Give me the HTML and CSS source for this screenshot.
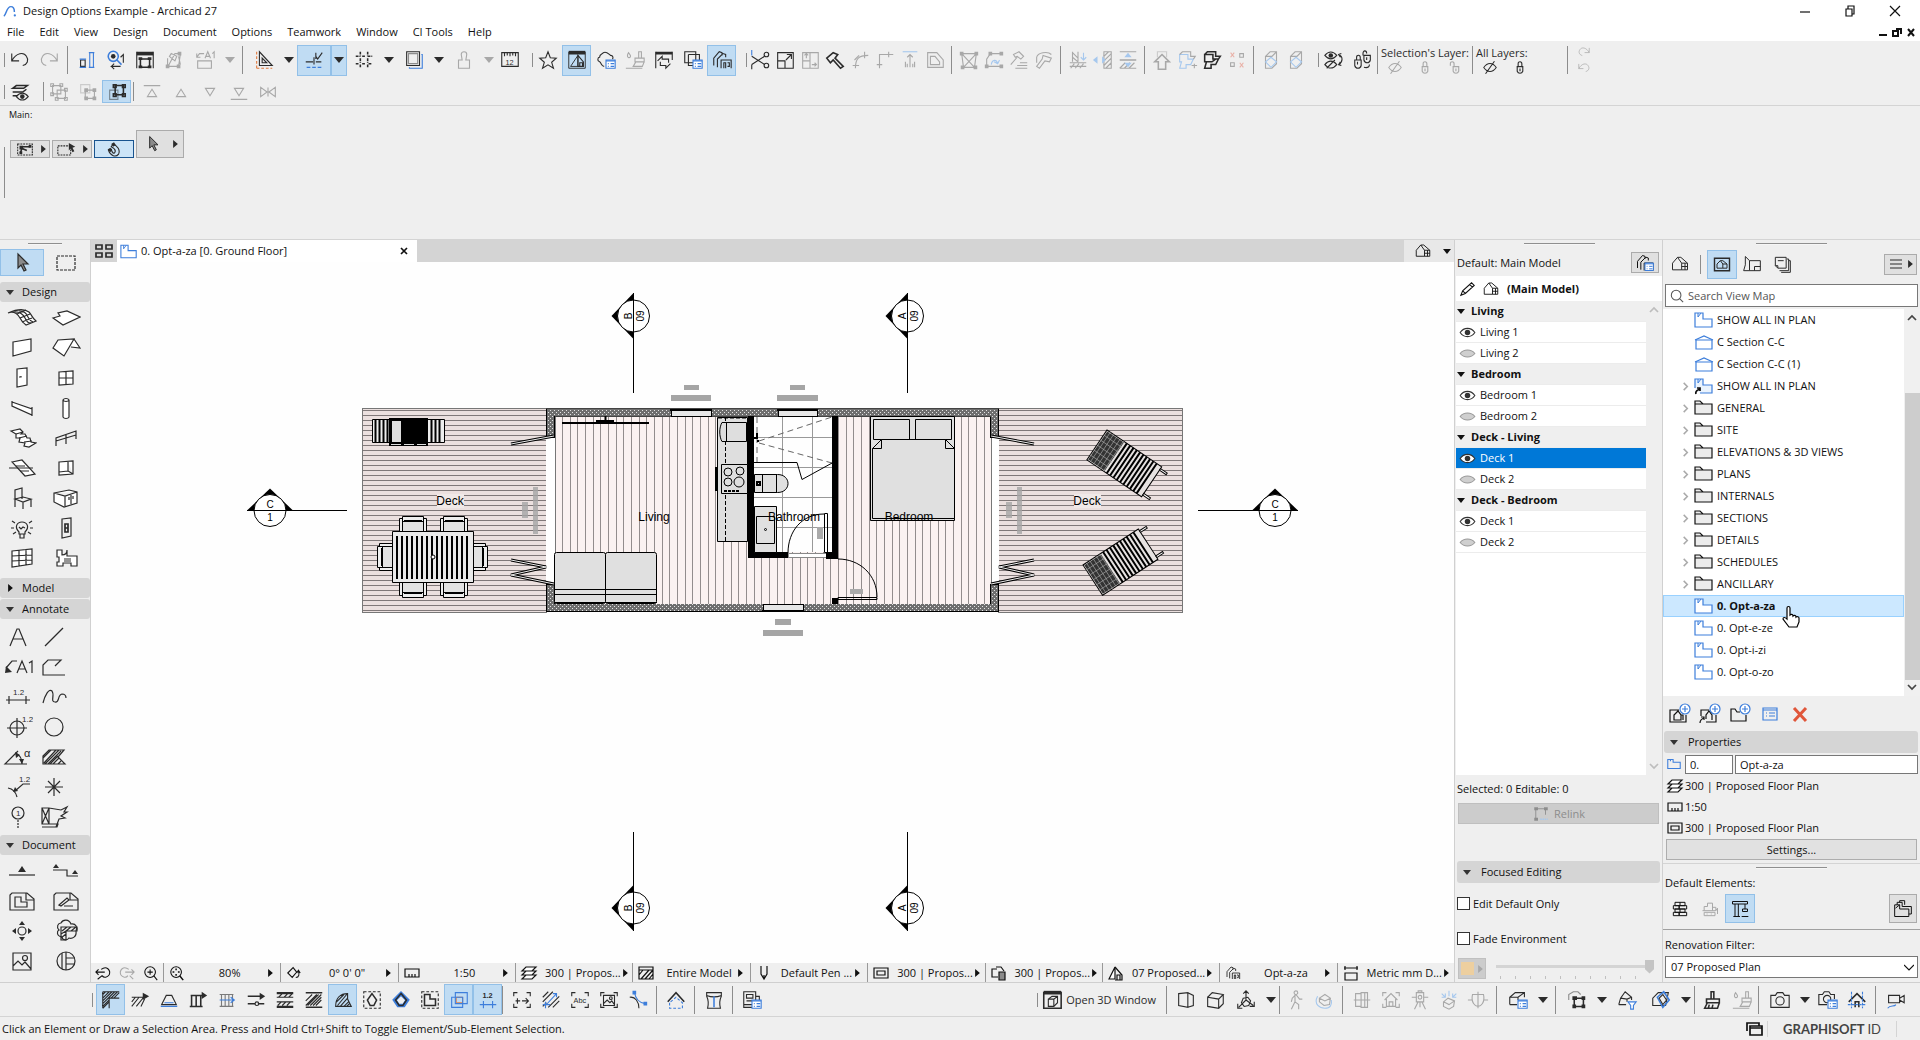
FILE: index.html
```
<!DOCTYPE html>
<html lang="en">

<head>
    <meta charset="UTF-8">
    <meta name="viewport" content="width=device-width, initial-scale=1.0">
    <title>Design Options Example - Archicad 27</title>
    <link rel="stylesheet" href="styles.css">
</head>

<body>

    <!-- Icon sprite -->
    <svg class="sprite" aria-hidden="true">
        <!-- generic -->
        <symbol id="down" viewBox="0 0 10 6"><path class="f" d="M0 0h10L5 6z"/></symbol>
        <symbol id="right" viewBox="0 0 6 10"><path class="f" d="M0 0v10L6 5z"/></symbol>
        <symbol id="chev-up" viewBox="0 0 10 10"><path class="thick" d="M1 7l4-4 4 4"/></symbol>
        <symbol id="chev-down" viewBox="0 0 10 10"><path class="thick" d="M1 3l4 4 4-4"/></symbol>
        <symbol id="chev-thin" viewBox="0 0 10 10"><path d="M0 2l5 5 5-5"/></symbol>
        <symbol id="chev-right" viewBox="0 0 10 10"><path class="thick" d="M3 1l4 4-4 4"/></symbol>
        <symbol id="logo" viewBox="0 0 16 16"><path class="b thick" d="M1 14C4 12 4 3 9 3c3 0 4 3 4 6"/><circle class="bf" cx="13.5" cy="13" r="1.3"/></symbol>
        <symbol id="cursor" viewBox="0 0 24 24"><path class="grey" d="M8 3v14l3-3 3 6 2-1-3-6h5z"/></symbol>

        <!-- standard toolbar -->
        <symbol id="undo" viewBox="0 0 24 24"><path d="M3 5v8h8M3 13C8 4 16 3 19 8c3 4 1 9-4 10"/></symbol>
        <symbol id="redo" viewBox="0 0 24 24"><path d="M21 5v8h-8M21 13C16 4 8 3 5 8c-3 4-1 9 4 10"/></symbol>
        <symbol id="pick" viewBox="0 0 24 24"><path d="M5 12h5v7H5z"/><path class="b" d="M4 20h7M14 4h6M14 20h6M4 11h7M15 4v16M19 4v16"/></symbol>
        <symbol id="inspect" viewBox="0 0 24 24"><circle class="b thick" cx="9" cy="8" r="5.5"/><circle class="f" cx="9" cy="8" r="2.5"/><path class="b thick" d="M13 12l5 5"/><path d="M20 15V6l-3 3M17 19H7l3-3M7 19l3 3"/></symbol>
        <symbol id="fit-frame" viewBox="0 0 24 24"><path class="f" d="M3 3h18v4H3z"/><path d="M3 3v18M21 3v18"/><path class="thick" d="M7 11h10v9H7z"/><path class="f" d="M5 9h4v3H5zM15 9h4v3h-4zM5 18h4v3H5zM15 18h4v3h-4z"/></symbol>
        <symbol id="magic" viewBox="0 0 24 24"><path d="M5 10v9h12l2-14h-6L5 20M9 5l6 3-2 5-6-5zM17 8l2 9"/><path class="f" d="M3 17h4v4H3zM15 17h4v4h-4zM16 3h4v4h-4z"/></symbol>
        <symbol id="label-box" viewBox="0 0 24 24"><path d="M4 13h15v8H4zM11 5H6L3 9M3 5v4h4M12 10l3-7 3 7M13 8h4M20 5l2-2v7"/></symbol>
        <symbol id="triangle" viewBox="0 0 24 24"><path d="M7 3v15h14zM10 10v5h5z"/><path class="o" d="M4 3v18M4 21h17" stroke-dasharray="3 2"/></symbol>
        <symbol id="guide" viewBox="0 0 24 24"><path d="M3 14h8M14 14h6M12 9v8M14 8l2 3 5-7M14 4v7"/><path class="b" d="M4 20h16" stroke-dasharray="4 2"/></symbol>
        <symbol id="grid" viewBox="0 0 24 24"><path class="thick" d="M8 3v5M8 10v5M8 17v4M16 3v5M16 10v5M16 17v4M3 8h5M10 8h4M16 8h5M3 16h4M10 16h4M17 16h4" stroke-dasharray="3 1"/></symbol>
        <symbol id="trace" viewBox="0 0 24 24"><path d="M4 3h14v15H4z"/><path class="b" d="M20 6h1v15H7v-1"/><path d="M6 5h10v11H6z" opacity=".5"/></symbol>
        <symbol id="stamp" viewBox="0 0 24 24"><path d="M10 12l-1-6c0-4 6-4 6 0l-1 6h4v9H6v-9z"/></symbol>
        <symbol id="ruler12" viewBox="0 0 24 24"><path d="M3 19V4h18v15zM6 4v4M9 4v3M12 4v4M15 4v3M18 4v4"/><text class="t8" x="7" y="17">12</text></symbol>
        <symbol id="star" viewBox="0 0 24 24"><path d="M12 3l2.500 6.500 6.500.5-5 4.500 2 6.500-6-3.700L6 21l2-6.500L3 10l6.500-.5z"/></symbol>
        <symbol id="house-win" viewBox="0 0 24 24"><path class="f" d="M3 2h18v4H3z"/><path d="M3 3v18h18V3M13 7L5 19h8z" stroke-width="1"/><path d="M13 7l6 7v5h-6zM15 19v-4h3v4"/></symbol>
        <symbol id="cloud-list" viewBox="0 0 24 24"><path d="M10 19c-3 0-3-4-5-5-3-1-2-5 0-5 0-4 3-3 4-5 4-2 6 2 8 3 3 0 3 3 2 4"/><use href="#list-badge"/></symbol>
        <symbol id="list-badge" viewBox="0 0 24 24"><path class="b white" d="M12 12h10v9H12z"/><path class="b" d="M12 13h10M14 16h1M17 16h4M14 19h1M17 19h4"/></symbol>
        <symbol id="drop-brush" viewBox="0 0 24 24"><path d="M5 4c-4 6 3 7 2 3zM16 3h3v7h-3zM12 10h10v4H12zM13 14l-3 5h10l2-5M2 21h18"/></symbol>
        <symbol id="win-swap" viewBox="0 0 24 24"><path class="f" d="M3 3h18v3H3z"/><path d="M3 3v18M21 3v9M5 13l5-5v3h7v4M19 16l-5 5v-3H8v-4"/></symbol>
        <symbol id="copy-list" viewBox="0 0 24 24"><path d="M3 3h12v12H3zM7 6h12v6M7 6v12h5"/><use href="#list-badge"/></symbol>
        <symbol id="options" viewBox="0 0 24 24"><path d="M3 18v-8l6-7 3 1v3M7 20v-9l6-6 3 1v3M11 21v-9h11v9M14 21v-6h2v6M18 15h2v4h-2"/></symbol>
        <symbol id="scissors" viewBox="0 0 24 24"><path d="M3 8l14 9M3 17L17 8"/><circle cx="19" cy="6" r="2.5"/><circle cx="19" cy="18" r="2.5"/><path class="b" d="M3 1v6"/><path d="M3 17v5"/></symbol>
        <symbol id="resize" viewBox="0 0 24 24"><path d="M4 4h17v17H4zM4 13h8v8M13 12l6-6M14 6h5v5"/></symbol>
        <symbol id="stretch" viewBox="0 0 24 24"><path d="M4 13h8v8H4zM4 4h17v17H4zM8 10V5M6 7l2-2 2 2M14 17h5M17 15l2 2-2 2M12 4v9"/></symbol>
        <symbol id="axe" viewBox="0 0 24 24"><path class="thick" d="M3 10l7-6 5 2-3 4 9 9-3 2-8-9-3 3z"/></symbol>
        <symbol id="fillet" viewBox="0 0 24 24"><path d="M7 21c0-10 3-14 14-14M4 18h7M17 3v7M6 12l5-5"/></symbol>
        <symbol id="corner" viewBox="0 0 24 24"><path d="M6 21V6h15M3 17h6M16 3v6"/></symbol>
        <symbol id="rise" viewBox="0 0 24 24"><path class="b" d="M4 3h16"/><path d="M12 20V6M9 9l3-3 3 3M7 20v-6M17 20v-6M9 20v-4M15 20v-4"/></symbol>
        <symbol id="offset" viewBox="0 0 24 24"><path d="M4 4h10l7 8v8H4zM7 8h5l5 6v3H7z"/></symbol>
        <symbol id="nodes-x" viewBox="0 0 24 24"><path d="M4 5h16l-2 15H6zM4 5l14 15M20 5L6 20"/><path class="f" d="M2 3h4v4H2zM18 3h4v4h-4zM3 18h4v4H3zM17 18h4v4h-4z"/></symbol>
        <symbol id="nodes-arc" viewBox="0 0 24 24"><path d="M8 5h12M8 5L4 11v8h16"/><path class="b" d="M9 17c1-6 6-6 7-1M18 12l-2 4-4-2"/><path class="f" d="M6 3h4v4H6zM18 3h4v4h-4zM2 17h4v4H2zM18 17h4v4h-4z"/></symbol>
        <symbol id="hammer" viewBox="0 0 24 24"><path d="M6 6l6-3 5 5-3 3-4-3-2 1zM10 9l-7 8M13 15h8M10 18h11M8 21h13"/></symbol>
        <symbol id="hammer2" viewBox="0 0 24 24"><path d="M4 15V9c1-5 12-7 16-3M11 7l9 3-2 4-5-1-6 8-3-2 6-8z"/></symbol>
        <symbol id="hatch-down" viewBox="0 0 24 24"><path d="M6 3v11M12 3v11M6 4l6 6M6 9l6 5M3 15h18M3 19h18M4 21l4-5M9 21l4-5M14 21l4-5"/><path class="b" d="M18 4v8M15 9l3 3 3-3"/></symbol>
        <symbol id="hatch-side" viewBox="0 0 24 24"><path d="M13 3h8v18h-8zM13 8l5-5M13 13l8-8M13 18l8-8M15 21l6-6"/><path class="bf" d="M1 12l5-4v8zM11 8l4 4-4 4z"/></symbol>
        <symbol id="hatch-mid" viewBox="0 0 24 24"><path d="M3 3h18M3 21h18M3 21l6-6M8 21l6-6M13 21l6-6"/><path class="thick" d="M3 12h18"/><path class="bf" d="M12 4l4 5H8zM12 20l4-5H8z"/></symbol>
        <symbol id="arrow-house" viewBox="0 0 24 24"><path class="thick" d="M12 6l8 8h-4v8H8v-8H4z"/><path d="M7 9V3h10v6" opacity=".5"/></symbol>
        <symbol id="beam" viewBox="0 0 24 24"><path class="b" d="M4 6h9v5h6l-3 6h-5v4H4l2-7H4z"/><path d="M4 6l3-3h9v5h5l-2 3M20 16v5M17 18h6"/></symbol>
        <symbol id="beam-dark" viewBox="0 0 24 24"><path class="thick" d="M4 6h9v5h6l-3 6h-5v4H4l2-7H4zM4 6l3-3h9v5h5l-2 3M6 14h6l4-3"/></symbol>
        <symbol id="xo" viewBox="0 0 24 24"><path class="r" d="M5 4l4 5M9 4L5 9M15 15l4 5M19 15l-4 5"/><path d="M15 5h4v4h-4zM5 15h4v4H5z"/></symbol>
        <symbol id="prism" viewBox="0 0 24 24"><path d="M6 8l5-5h7v13l-5 5H6zM6 8h7l5-5"/><path class="b" d="M6 14l6-5 6 5-6 6z"/></symbol>
        <symbol id="eye-swap" viewBox="0 0 24 24"><path d="M2 7c4-5 9-5 13 0-4 5-9 5-13 0zM2 17c4-5 9-5 13 0-4 5-9 5-13 0zM4 21l9-9M17 6c5 2 5 8 0 11M20 5l-3 1 2 3M19 14l-2 3 3 1"/><circle class="f" cx="8.5" cy="7" r="2.5"/></symbol>
        <symbol id="lock-swap" viewBox="0 0 24 24"><path d="M3 12h7v6c-1 4-6 4-7 0zM5 12V9c0-3 4-3 4 0v3M13 7h7v5c-1 4-6 4-7 0zM12 7V5c0-4 4-4 4 0M13 20c5 1 6-1 6-3M6 14v3M16 9v3"/></symbol>
        <symbol id="eye-off" viewBox="0 0 18 14"><path d="M2 7c4-6 10-6 14 0-4 6-10 6-14 0zM4 14L14 0"/></symbol>
        <symbol id="lock" viewBox="0 0 14 14"><path d="M4 6h6v5c-1 3-5 3-6 0zM5 6V3c0-3 4-3 4 0v3M7 8v3"/></symbol>
        <symbol id="unlock" viewBox="0 0 14 14"><path d="M5 6h6v5c-1 3-5 3-6 0zM2 5V3c0-3 4-3 4 0v3M8 8v3"/></symbol>

        <!-- second toolbar -->
        <symbol id="layers-eye" viewBox="0 0 24 24"><path class="thick" d="M4 8l4-3h12l-4 3zM4 12h11l4-3M4 16h5"/><path d="M8 17c4-5 9-5 13 0-4 5-9 5-13 0z"/><circle class="f" cx="14.5" cy="17" r="2.5"/></symbol>
        <symbol id="group" viewBox="0 0 24 24"><path d="M5 5h9v9H5zM10 10h9v9h-9z"/><path d="M3 3h3v3H3zM13 3h3v3h-3zM3 13h3v3H3zM18 8h3v3h-3zM8 18h3v3H8zM18 18h3v3h-3z"/></symbol>
        <symbol id="group2" viewBox="0 0 24 24"><path d="M4 4h10v9H4z" opacity=".5"/><path d="M9 10h10v9H9z"/><path class="f" d="M8 8h4v4H8zM17 8h4v4h-4zM8 17h4v4H8zM17 17h4v4h-4z"/></symbol>
        <symbol id="group3" viewBox="0 0 24 24"><path d="M4 10h9v10H4z" opacity=".5"/><path class="thick" d="M10 5h9v10h-9zM8 4h3v3H8zM18 4h3v3h-3zM8 14h3v3H8zM18 14h3v3h-3z"/></symbol>
        <symbol id="tri-top" viewBox="0 0 24 24"><path d="M3 5h18M12 9l5 8H7z"/></symbol>
        <symbol id="tri-up" viewBox="0 0 24 24"><path d="M12 9l5 8H7z"/></symbol>
        <symbol id="tri-down" viewBox="0 0 24 24"><path d="M12 16l5-8H7z"/></symbol>
        <symbol id="tri-bottom" viewBox="0 0 24 24"><path d="M12 16l5-8H7zM3 20h18"/></symbol>
        <symbol id="mirror" viewBox="0 0 24 24"><path d="M4 7v10l7-5zM20 7v10l-7-5zM12 7v10"/></symbol>
        <symbol id="poly-sel" viewBox="0 0 24 16"><path d="M4 2h16v12H4z" stroke-dasharray="2 1"/><path class="thick" d="M7 12l2-7h8M7 6l7 3"/><path class="f" d="M6 4h4v4H6zM16 3h3v3h-3zM6 10h3v3H6z"/></symbol>
        <symbol id="rect-sel" viewBox="0 0 24 16"><path d="M2 4h14v10H2z" stroke-dasharray="2 1"/><path class="f" d="M14 1l7 4-3 1 2 4-2 1-2-4-2 2z"/></symbol>
        <symbol id="magnet" viewBox="0 0 24 16"><path d="M6 9c2 6 8 8 11 4 2-4-1-9-6-11L9 5c4 2 5 4 4 6s-3 1-4-3z"/><path class="f" d="M5 8l3-2 2 2-2 3zM9 2l3-2 2 3-3 2z"/></symbol>

        <!-- toolbox -->
        <symbol id="t-marquee" viewBox="0 0 30 24"><path d="M6 5h18v14H6z" stroke-dasharray="3 1"/></symbol>
        <symbol id="t-shell" viewBox="0 0 30 24"><path class="white" d="M1 7c5-2 9 0 12 5 2 4 3 5 6 7l10-4c-4-3-4-6-7-9-4-3-12-3-21 1z"/><path d="M6 6c7-1 10 2 12 6s3 5 6 5M12 5c6 0 8 3 9 6 2 3 2 4 5 5M10 8l9-4M13 12l10-4M15 16l10-4"/></symbol>
        <symbol id="t-slab" viewBox="0 0 30 24"><path class="white" d="M2 12l7-2-2-3 9-2 13 6-17 8z"/></symbol>
        <symbol id="t-wall" viewBox="0 0 30 24"><path class="white" d="M6 6l18-3v12L6 20z"/></symbol>
        <symbol id="t-roof" viewBox="0 0 30 24"><path class="white" d="M2 12l5-8 16-1-10 17zM23 3l6 9-9-1"/></symbol>
        <symbol id="t-door" viewBox="0 0 30 24"><path class="white" d="M10 3l10-1v17l-10 2zM12 11h2v-1"/></symbol>
        <symbol id="t-window" viewBox="0 0 30 24"><path class="white" d="M8 6l14-1v13L8 19zM15 5v13M8 12h14"/></symbol>
        <symbol id="t-beam" viewBox="0 0 30 24"><path class="white" d="M5 6l20 7v6L5 10zM5 5v5M25 11v9"/></symbol>
        <symbol id="t-column" viewBox="0 0 30 24"><path class="white" d="M12 4c1-2 5-2 6 0v17c-1 2-5 2-6 0zM12 4c1 2 5 2 6 0"/></symbol>
        <symbol id="t-stair" viewBox="0 0 30 24"><path class="white" d="M4 5l9-2 3 3-2 2h4l2 4h3l1 4 5 1-7 4-5-1 1-3-6-1 1-4H9V8z"/><path d="M9 8l7-2M12 12l8-2M17 16l8-1"/></symbol>
        <symbol id="t-rail" viewBox="0 0 30 24"><path d="M5 20v-8l20-7v8M15 9v9M5 15l20-6"/></symbol>
        <symbol id="t-ramp" viewBox="0 0 30 24"><path class="white" d="M5 6l10-2 13 14-10 2z"/><path d="M2 12h24M9 10h9M13 15h9"/></symbol>
        <symbol id="t-opening" viewBox="0 0 30 24"><path class="white" d="M8 6l14-1v13L8 19zM17 5v10l5 3M17 15l-9 1"/></symbol>
        <symbol id="t-chair" viewBox="0 0 30 24"><path d="M8 21V4l7-2v11M8 13l8 3 8-3-8-2zM16 16v7M24 13v8"/></symbol>
        <symbol id="t-cabinet" viewBox="0 0 30 24"><path class="white" d="M3 7l15-3 8 2v11L13 21 3 16zM3 7l11 3 12-4M14 10v11M20 9v9M18 11v3M22 10v3"/></symbol>
        <symbol id="t-lamp" viewBox="0 0 30 24"><path d="M12 16c-5-5-2-10 3-10s8 5 3 10v2h-6zM13 18v4h4v-4M12 11l2 2 2-2 2 1M5 5l3 2M25 5l-3 2M4 12h3M23 12h3M6 18l3-2M24 18l-3-2"/></symbol>
        <symbol id="t-switch" viewBox="0 0 30 24"><path d="M11 3l9-1v18l-9 2z"/><path class="thick" d="M14 8h3v8h-3zM14 12h3"/></symbol>
        <symbol id="t-curtain" viewBox="0 0 30 24"><path class="white" d="M5 5l20-2v15L5 21zM12 4v16M19 3v16M5 10l20-1M5 15l20-1"/></symbol>
        <symbol id="t-zone" viewBox="0 0 30 24"><path class="white" d="M6 4h5v5c4 0 5-2 5-5h0v6h10v10H20v-3h-8v3H6v-4h2v-5H6zM13 13h7M13 15h7"/></symbol>
        <symbol id="t-text" viewBox="0 0 30 24"><path d="M7 21l7-17h2l7 17M10 14h10"/></symbol>
        <symbol id="t-line" viewBox="0 0 30 24"><path d="M6 21L24 3"/></symbol>
        <symbol id="t-label" viewBox="0 0 30 24"><path d="M14 6H9l-6 7M14 18l5-12 5 12M16 14h6M26 8l3-2v12"/><path class="f" d="M2 18l1-7 6 6z"/></symbol>
        <symbol id="t-poly" viewBox="0 0 30 24"><path d="M26 20H4V10l5-5h13l-6 6"/></symbol>
        <symbol id="t-dim" viewBox="0 0 30 24"><path d="M3 15h24M6 11v8M23 11v8"/><text class="t8" x="10" y="10">1.2</text></symbol>
        <symbol id="t-spline" viewBox="0 0 30 24"><path d="M4 18C6 10 10 3 13 6c3 4-2 11 3 11 5 1 2-7 7-8 3 0 4 2 4 4"/></symbol>
        <symbol id="t-level" viewBox="0 0 30 24"><circle cx="14" cy="13" r="7"/><path d="M14 3v20M4 13h20"/><text class="t8" x="19" y="7">1.2</text></symbol>
        <symbol id="t-circle" viewBox="0 0 30 24"><circle cx="15" cy="12" r="9"/></symbol>
        <symbol id="t-angle" viewBox="0 0 30 24"><path d="M24 19H2L15 6M14 9c4 2 5 6 5 10"/><path class="f" d="M12 7l5 3-4 3zM16 14h5l-2 5z"/><text class="t10" x="21" y="12">α</text></symbol>
        <symbol id="t-fill" viewBox="0 0 30 24"><path d="M4 19v-8l6-6h15l-6 7 7 7zM5 18L17 5M9 19L22 6M14 19l6-6M19 19l3-3M4 13l8-8M6 19L20 5M11 19l8-8"/></symbol>
        <symbol id="t-radial" viewBox="0 0 30 24"><path d="M5 13c6 1 8 5 9 9M27 9h-7l-8 7"/><path class="f" d="M10 17l2-5 3 4z"/><text class="t8" x="16" y="7">1.2</text></symbol>
        <symbol id="t-hotspot" viewBox="0 0 30 24"><path d="M15 3v18M6 12h18M9 6l12 12M21 6L9 18"/></symbol>
        <symbol id="t-gridel" viewBox="0 0 30 24"><circle cx="15" cy="8" r="6"/><path d="M15 15v8" stroke-dasharray="2 1"/><text class="t8" x="13" y="11">1</text></symbol>
        <symbol id="t-change" viewBox="0 0 30 24"><path d="M3 3h7v16H3zM3 3l7 16M10 3L3 19M10 3l12 2 6-3-3 5h3l-6 4 4 2-6 1-3 8M3 22h15l1-3h-9"/></symbol>
        <symbol id="t-section" viewBox="0 0 30 24"><path d="M2 16h26"/><path class="f" d="M15 7l4 6h-8z"/></symbol>
        <symbol id="t-elev" viewBox="0 0 30 24"><path d="M2 11h14v6h11"/><path class="f" d="M5 5l3 4H2zM24 11l3 4h-6z"/></symbol>
        <symbol id="t-sheet" viewBox="0 0 30 24"><path d="M5 4h15l7 6v11H3V6zM19 4v7h8"/><path d="M8 8h6v5h6v5H8z"/></symbol>
        <symbol id="t-worksheet" viewBox="0 0 30 24"><path d="M5 4h15l7 6v11H3V6zM19 4v7h8"/><path d="M8 16l8-7 2 2-8 6zM13 17h9"/></symbol>
        <symbol id="t-camera" viewBox="0 0 30 24"><circle cx="15" cy="12" r="4"/><path class="f" d="M15 2l3 4h-6zM15 22l3-4h-6zM5 12l4-3v6zM25 12l-4-3v6z"/></symbol>
        <symbol id="t-detail" viewBox="0 0 30 24"><path d="M10 4c2-4 8-4 10 1 5-1 7 4 5 7 1 6-4 8-7 7-2 3-7 2-7-1-6-1-5-6-3-7-3-3-1-7 2-7z"/><path d="M10 8h16v4H15v9h-5zM11 12l5-4M15 12l5-4M20 12l5-4M10 15l5-3M10 19l5-4"/></symbol>
        <symbol id="t-picture" viewBox="0 0 30 24"><path d="M6 4h18v17H6zM6 17l5-5 4 4 3-3 6 7"/><circle cx="18" cy="9" r="2.5"/></symbol>
        <symbol id="t-globe" viewBox="0 0 30 24"><circle cx="15" cy="12" r="9"/><path d="M11 4v16M15 3v18M15 9h9M15 15h9"/></symbol>

        <!-- navigator -->
        <symbol id="tabs" viewBox="0 0 20 16"><path class="thick" d="M2 2h6v4H2zM12 2h6v4h-6zM2 10h6v4H2zM12 10h6v4h-6z"/></symbol>
        <symbol id="plan" viewBox="0 0 20 18"><path class="b white" d="M1 2h8v6h9v8H1z"/><path class="b" d="M4 2v4l3-4" stroke-width="1"/></symbol>
        <symbol id="section" viewBox="0 0 20 18"><path class="b white" d="M2 7h16v9H2z"/><path class="b" d="M1 7l9-4 9 4"/></symbol>
        <symbol id="plan-link" viewBox="0 0 20 18"><path class="b pale" d="M1 11V2h8v6h9v8H6"/><path class="b" d="M4 2v4l3-4" stroke-width="1"/><path class="thick" d="M2 17c-1-3 1-4 4-5M3 11h3v3"/></symbol>
        <symbol id="folder" viewBox="0 0 20 18"><path class="fold" d="M1 15V2h5l3 3h9v10zM1 5h8"/></symbol>
        <symbol id="folder-b" viewBox="0 0 20 18"><path class="b" d="M3 14V4h6v3h8v7zM6 4v2"/></symbol>
        <symbol id="model" viewBox="0 0 24 24"><path d="M3 19v-8l6-7 5 7v8zM9 4h4l8 7v8h-7M14 11h7M14 15h7M18 11v8"/></symbol>
        <symbol id="viewmap" viewBox="0 0 24 24"><path class="thick" d="M3 5h18v15H3z"/><path d="M6 17v-5l4-4 3 4v5zM10 8h3l5 4v5h-5M13 12h5"/></symbol>
        <symbol id="layoutbook" viewBox="0 0 24 24"><path d="M2 20l2-7V3l5 5v12H2zM9 8h13v12H9M15 20v-5h7"/></symbol>
        <symbol id="publisher" viewBox="0 0 24 24"><path d="M4 4h13v13H7l-3-3zM7 8h7M4 14h3v3M18 6h2v14H9M20 8h2v14H11"/></symbol>
        <symbol id="menu" viewBox="0 0 14 12"><path d="M1 2h12M1 6h12M1 10h12"/></symbol>
        <symbol id="search" viewBox="0 0 16 16"><circle cx="7" cy="7" r="5.5"/><path d="M11 11l4 4"/></symbol>
        <symbol id="plus" viewBox="0 0 24 24"><circle class="b white" cx="17" cy="7" r="5"/><path class="b" d="M17 4v6M14 7h6"/></symbol>
        <symbol id="add-view" viewBox="0 0 24 24"><path d="M11 8H2v12h16v-7M6 18v-5l4-4 3 4v5zM13 13h2v5"/><use href="#plus"/></symbol>
        <symbol id="add-clone" viewBox="0 0 24 24"><path d="M11 8H3v6M8 20h10v-7M8 17v-4l3-4 3 4v5M2 21c0-3 1-4 4-5M3 15h3v3"/><use href="#plus"/></symbol>
        <symbol id="add-folder" viewBox="0 0 24 24"><path d="M12 10H9L7 7H3v12h15v-6"/><use href="#plus"/></symbol>
        <symbol id="listing" viewBox="0 0 24 24"><path class="b" d="M5 6h14v12H5zM5 8h14M8 11h1M11 11h6M8 14h1M11 14h6"/></symbol>
        <symbol id="delete" viewBox="0 0 24 24"><path class="red" d="M6 6l12 13M18 6L6 19"/></symbol>
        <symbol id="pencil" viewBox="0 0 20 18"><path d="M2 16l2-5L14 2l3 3L7 14zM12 4l3 3M4 11l3 3"/></symbol>
        <symbol id="eye" viewBox="0 0 18 12"><path class="white" d="M1 6c4-6 12-6 16 0-4 6-12 6-16 0z"/><circle class="f" cx="9" cy="6" r="3"/></symbol>
        <symbol id="eye-shut" viewBox="0 0 18 12"><path class="shut" d="M1 6c4-5 12-5 16 0-4 5-12 5-16 0z"/></symbol>
        <symbol id="layers" viewBox="0 0 18 16"><path class="white" d="M2 14l4-4h10l-4 4zM2 10l4-4h10l-4 4zM2 6l4-4h10l-4 4z"/></symbol>
        <symbol id="scale" viewBox="0 0 18 16"><path d="M2 4h14v8H2zM6 9v3M9 9v3M12 9v3"/></symbol>
        <symbol id="pens" viewBox="0 0 18 16"><path d="M2 3h14v10H2zM5 6h8v4H5z"/></symbol>
        <symbol id="bricks" viewBox="0 0 24 24"><path d="M6 4h12v4H6zM4 8h7v4H4zM11 8h9v4h-9zM6 12h12v4H6zM4 16h7v4H4zM11 16h9v4h-9zM12 4v4M12 12v4"/></symbol>
        <symbol id="dozer" viewBox="0 0 24 24"><path d="M5 14V9h4V5h6v9M15 10h4v4M3 14h16l2-3v7M5 16h13v4H5z"/><path d="M8 18h1M13 18h1"/></symbol>
        <symbol id="crane" viewBox="0 0 24 24"><path d="M3 3h18v3H3zM6 6v15M10 6v15M4 21h8M18 6v6M15 12h6v3h-6zM14 21h8"/></symbol>
        <symbol id="plans" viewBox="0 0 24 24"><path d="M2 7h6v5h11v9H2zM5 7V4h6v5h11v9h-3M8 4V2h6v5"/><path d="M3 11l5-4"/></symbol>
        <symbol id="relink" viewBox="0 0 24 24"><path d="M6 5h12M5 6v12M18 6v7"/><path class="f" d="M3 3h5v4H3zM16 3h5v4h-5zM3 17h5v4H3z"/><path class="b thick" d="M11 19h10" stroke-dasharray="2 1"/></symbol>

        <!-- quick options -->
        <symbol id="zoom-back" viewBox="0 0 20 18"><path d="M8 5c6-5 11 1 9 6-2 3-6 4-8 1M2 8h10M5 5L2 8l3 3M9 12l-5 4"/></symbol>
        <symbol id="zoom-fwd" viewBox="0 0 20 18"><path d="M12 5C6 0 1 6 3 11c2 3 6 4 8 1M8 8h10M15 5l3 3-3 3M13 12l4 4"/></symbol>
        <symbol id="zoom-in" viewBox="0 0 20 18"><circle cx="9" cy="8" r="6"/><path d="M13 12l4 5M9 5v6M6 8h6"/></symbol>
        <symbol id="zoom-fit" viewBox="0 0 20 18"><circle cx="9" cy="8" r="6"/><path class="thick" d="M13 12l4 5M9 4v2M9 10v2M5 8h2M11 8h2"/></symbol>
        <symbol id="orient" viewBox="0 0 20 18"><path d="M3 9l6-6 4 5-5 6zM12 14c4 0 4-4 3-7M13 9l2-3 2 3"/></symbol>
        <symbol id="hatch-win" viewBox="0 0 18 16"><path d="M2 2h14v12H2zM2 5h14M4 14l8-9M8 14l8-9M2 10l4-5M12 14l4-5"/></symbol>
        <symbol id="pen" viewBox="0 0 18 16"><path d="M6 1v8l3 5 3-5V1M9 10v4"/></symbol>
        <symbol id="copy-to" viewBox="0 0 18 16"><path d="M7 4H2v8h6M6 2h5l3 4"/><path class="grey" d="M9 7h6v8H9z"/></symbol>
        <symbol id="reno" viewBox="0 0 18 16"><path class="white" d="M2 14L8 2v12z"/><path d="M8 2l7 8v5H8M10 15v-5h3v5"/></symbol>
        <symbol id="dimstd" viewBox="0 0 18 16"><path d="M2 3h14M3 1v4M15 1v4M3 8h12v7H3z"/></symbol>

        <!-- bottom toolbar -->
        <symbol id="b-wall" viewBox="0 0 24 24"><path d="M3 3h18M3 3v18M3 10l7-7M3 16L16 3M3 21l7-7M10 21V10h11M15 10l6-6M3 6l3-3M3 13L13 3M3 19l7-7M12 10l7-7"/></symbol>
        <symbol id="b-hatch-arrow" viewBox="0 0 24 24"><path d="M3 19l8-10M8 19l8-10M13 19l4-8M3 9h14M3 14l4-5"/><path class="f" d="M15 4l7 4-7 4z"/></symbol>
        <symbol id="b-trap" viewBox="0 0 24 24"><path d="M4 17l5-10h6l5 10z"/><path class="b" d="M3 19h18M7 15h10"/></symbol>
        <symbol id="b-cols" viewBox="0 0 24 24"><path class="thick" d="M4 7h13M5 7v12M10 7v12M15 7v12M3 19h14"/><path class="f" d="M16 3l6 4-6 4z"/></symbol>
        <symbol id="b-grid" viewBox="0 0 24 24"><path d="M4 6h15M4 19h15M6 6v13M10 6v13M14 6v13M18 6v13" opacity=".6"/><path class="b" d="M4 12h16M16 9l4 3-4 3"/></symbol>
        <symbol id="b-arrowbar" viewBox="0 0 24 24"><path class="thick" d="M3 8h14M3 16h8M14 16h7"/><circle cx="13" cy="16" r="2"/><path class="f" d="M16 4l6 4-6 4z"/></symbol>
        <symbol id="b-slab" viewBox="0 0 24 24"><path d="M3 4h18M3 5h18M3 9h18M3 14h18M3 19h18M3 20h18M4 18l4-4M9 18l4-4M14 18l4-4M5 9l4-4M11 9l4-4M16 9l4-4M4 14h16"/></symbol>
        <symbol id="b-hatch" viewBox="0 0 24 24"><path class="thick" d="M3 4h18M3 20h18"/><path d="M3 18L15 6M8 18L20 6M14 18l6-6M3 13l7-7M5 18L17 6M11 18l9-9"/></symbol>
        <symbol id="b-fill" viewBox="0 0 24 24"><path d="M4 19C4 10 9 5 17 5v6l4 8zM6 18l10-12M9 19l8-9M13 19l5-5M5 14l8-8M16 19l3-3"/></symbol>
        <symbol id="b-house-dash" viewBox="0 0 24 24"><path d="M3 3h18v18H3z" stroke-dasharray="3 2"/><path class="thick" d="M12 5l5 7-3 6h-4l-3-6z"/></symbol>
        <symbol id="b-diamond" viewBox="0 0 24 24"><path class="b3" d="M12 5l7 7-4 6H9l-4-6z"/><path class="thick" d="M12 5l6 7-4 6h-4l-4-6z"/></symbol>
        <symbol id="b-zone" viewBox="0 0 24 24"><path d="M3 3h18v18H3z" stroke-dasharray="3 2"/><path class="thick" d="M6 6h6v5h6v7H6z"/></symbol>
        <symbol id="b-overlap" viewBox="0 0 24 24"><path class="o" d="M9 9h7v6H9z" stroke-width="1"/><path class="b" d="M8 4h13v12H8zM4 9h12v11H4z"/></symbol>
        <symbol id="b-dim" viewBox="0 0 24 24"><path class="b" d="M3 17h18M7 13v8M17 13v8"/><text class="t8 bold" x="6" y="10">1.2</text></symbol>
        <symbol id="b-corners" viewBox="0 0 24 24"><path d="M3 8V4h4M17 4h4v4M21 16v4h-4M7 20H3v-4"/></symbol>
        <symbol id="b-dimc" viewBox="0 0 24 24"><use href="#b-corners"/><path d="M5 13h5M12 13h7M7 10v6M16 10l3 3-3 3"/></symbol>
        <symbol id="b-fillb" viewBox="0 0 24 24"><path d="M3 9l6-6M3 14L14 3M9 20L21 8M14 20l7-7M3 19l4-4"/><path class="b" d="M6 18L18 5M14 5h4v4M3 17h8M6 14v7"/></symbol>
        <symbol id="b-abc" viewBox="0 0 24 24"><use href="#b-corners"/><text class="t8" x="5" y="15">Abc</text></symbol>
        <symbol id="b-pic" viewBox="0 0 24 24"><use href="#b-corners"/><path d="M6 7h12v11H6zM6 16l4-4 3 3 2-2 3 4"/><circle cx="14" cy="10" r="1.5"/></symbol>
        <symbol id="b-curve" viewBox="0 0 24 24"><path d="M3 9c6-1 10 5 10 12"/><path class="b" d="M8 3c1 7 5 12 12 13"/><path class="bf" d="M6 2h4v4H6zM18 14h4v4h-4z"/></symbol>
        <symbol id="b-roof" viewBox="0 0 24 24"><path class="thick" d="M3 14l9-10 9 10"/><path class="b" d="M5 15v6h14v-6l-7-6z" stroke-dasharray="3 2"/></symbol>
        <symbol id="b-barrel" viewBox="0 0 24 24"><path d="M4 4h16v4c-2 4-2 9-1 13H5C6 17 6 12 4 8zM4 7c5 2 11 2 16 0"/><path class="b thick" d="M12 8v12"/></symbol>
        <symbol id="b-panels" viewBox="0 0 24 24"><path d="M3 3h13v17H3zM6 6h7v4H6zM6 13h6M3 17h9M16 8h4v4"/><use href="#list-badge"/></symbol>
        <symbol id="b-3dwin" viewBox="0 0 24 24"><path class="f" d="M3 2h19v4H3z"/><path class="thick" d="M3 3v18h19V3"/><path d="M8 11l4-3h6v7l-4 4H8zM8 11h6l4-3M14 11v8"/></symbol>
        <symbol id="b-persp" viewBox="0 0 24 24"><path d="M4 5l10-1v16L4 18zM14 4l6 3v11l-6 2"/></symbol>
        <symbol id="b-axo" viewBox="0 0 24 24"><path d="M4 9l12 2v10L4 19zM4 9l5-5 12 2-5 5M21 6v10l-5 5"/></symbol>
        <symbol id="b-orbit" viewBox="0 0 24 24"><path d="M12 12V2M9 5l3-3 3 3M12 12l-8 8M3 16v5h5M12 12l8 6M21 14v5h-5M9 10l5-1 3 4-2 5-5 1-3-4z"/></symbol>
        <symbol id="b-walk" viewBox="0 0 24 24"><circle cx="13" cy="4" r="2"/><path d="M13 6l-4 4-1 4M13 6l4 5h3M12 8v6l4 3v5M12 14l-4 8"/></symbol>
        <symbol id="b-explore" viewBox="0 0 24 24"><path d="M7 10l6-4 6 4-1 7-6 1-5-4zM7 10l6 3 6-3"/><path class="b" d="M5 8c-5 9 3 13 8 13 6 0 8-4 7-9"/></symbol>
        <symbol id="b-fit" viewBox="0 0 24 24"><path d="M5 5h6v14H5zM11 4h7v16h-7zM3 12h18M15 4v16"/></symbol>
        <symbol id="b-homefit" viewBox="0 0 24 24"><use href="#b-corners"/><path d="M5 12l7-7 7 7M7 11v8h10v-8M10 19v-5h4v5"/></symbol>
        <symbol id="b-station" viewBox="0 0 24 24"><path d="M8 4h8v10H8zM10 4V2h4v2M3 9h5M16 9h5M10 14l-4 8M14 14l4 8M12 14v6"/><circle cx="12" cy="9" r="2"/></symbol>
        <symbol id="b-pushbox" viewBox="0 0 24 24"><path d="M6 14l5-4 7 3-1 6-5 3-6-3zM6 14l6 3 6-4"/><path class="b" d="M12 2v6M4 5l4 4M20 5l-4 4M8 5v4H4M16 5v4h4"/></symbol>
        <symbol id="b-globe" viewBox="0 0 24 24"><path d="M6 6h12c2 9-3 13-6 13S4 15 6 6zM12 3v18M1 12h5M18 12h5"/></symbol>
        <symbol id="b-boxlist" viewBox="0 0 24 24"><path d="M3 17V9l6-5h10v5M3 9h9l7-5M12 9v3M3 17h8"/><use href="#list-badge"/></symbol>
        <symbol id="b-boxnodes" viewBox="0 0 24 24"><path d="M3 12V6l5-3h5l3 3" opacity=".5"/><path class="thick" d="M9 10h10v9H9z"/><path class="f" d="M7 8h5v4H7zM17 8h4v4h-4zM7 17h4v4H7zM17 17h4v4h-4z"/></symbol>
        <symbol id="b-filter" viewBox="0 0 24 24"><path d="M3 17l2-7 5-7 7 6v3M3 17h8M5 10l7 1 5-2M12 11v3"/><path class="b white" d="M13 14h9l-3 4v4h-3v-4z"/></symbol>
        <symbol id="b-cut" viewBox="0 0 24 24"><path d="M3 18v-8l6-6h11l-3 14z"/><path class="b thick" d="M8 9l7-6 6 9-7 8z"/><path d="M10 10l4-4 4 6-4 5z"/></symbol>
        <symbol id="b-brush" viewBox="0 0 24 24"><path class="thick" d="M11 3h3v8h-3zM6 11h14v4H6zM7 15l-3 6h14l2-6M9 17l-1 4M13 17l-1 4"/></symbol>
        <symbol id="b-camera" viewBox="0 0 24 24"><path d="M2 7h5l2-3h6l2 3h5v13H2z"/><circle cx="12" cy="13" r="4.5"/></symbol>
        <symbol id="b-camlist" viewBox="0 0 24 24"><path d="M11 17H2V6h4l2-3h5l2 3h4v5"/><circle cx="11" cy="11" r="4"/><use href="#list-badge"/></symbol>
        <symbol id="b-homepts" viewBox="0 0 24 24"><path class="thick" d="M3 14l9-9 9 9M10 20v-6h4v6"/><path class="b" d="M6 3v18M18 3v18M2 17h20" stroke-dasharray="3 1"/></symbol>
        <symbol id="b-video" viewBox="0 0 24 24"><path d="M5 7h12v8H5zM17 10l5-3v8l-5-3"/><path class="b" d="M4 21c3-4 7-1 9-4"/></symbol>
        <symbol id="windows" viewBox="0 0 18 16"><path class="thick" d="M5 5h12v9H5zM2 10V2h12v3M5 7h12"/></symbol>
    </svg>

    <!-- Title and menu -->
    <header class="top">
        <div class="titlebar">
            <svg class="logo"><use href="#logo"/></svg>
            <span>Design Options Example - Archicad 27</span>
            <div class="window-buttons">
                <button title="Minimize"><svg viewBox="0 0 12 12"><path d="M1 7h10"/></svg></button>
                <button title="Restore"><svg viewBox="0 0 12 12"><path d="M2 4h6v7H2zM4 4V1h6v8H8"/></svg></button>
                <button title="Close"><svg viewBox="0 0 12 12"><path d="M1 1l10 10M11 1L1 11"/></svg></button>
            </div>
        </div>
        <nav class="menubar">
            <a href="#file">File</a>
            <a href="#edit">Edit</a>
            <a href="#view">View</a>
            <a href="#design">Design</a>
            <a href="#document">Document</a>
            <a href="#options-menu">Options</a>
            <a href="#teamwork">Teamwork</a>
            <a href="#window">Window</a>
            <a href="#citools">CI Tools</a>
            <a href="#help">Help</a>
            <div class="doc-buttons">
                <button title="Minimize document"><svg viewBox="0 0 10 10"><path d="M1 8h8"/></svg></button>
                <button title="Restore document"><svg viewBox="0 0 10 10"><path d="M1 4h5v5H1zM4 2h5v5"/></svg></button>
                <button title="Close document"><svg viewBox="0 0 10 10"><path d="M2 2l6 7M8 2L2 9"/></svg></button>
            </div>
        </nav>
    </header>

    <!-- Standard toolbar -->
    <div class="toolbar main-bar">
        <i class="grip"></i>
        <button class="tool" title="Undo"><svg><use href="#undo"/></svg></button>
        <button class="tool" title="Redo" disabled><svg><use href="#redo"/></svg></button>
        <i class="sep"></i>
        <button class="tool" title="Pick Up"><svg><use href="#pick"/></svg></button>
        <button class="tool" title="Find"><svg><use href="#inspect"/></svg></button>
        <button class="tool" title="Edit Selection"><svg><use href="#fit-frame"/></svg></button>
        <button class="tool" title="Magic" disabled><svg><use href="#magic"/></svg></button>
        <button class="tool wide" title="Label" disabled><svg><use href="#label-box"/></svg></button>
        <button class="drop" title="More" disabled><svg><use href="#down"/></svg></button>
        <i class="sep"></i>
        <button class="tool wide" title="Set Square"><svg><use href="#triangle"/></svg></button>
        <button class="drop" title="More"><svg><use href="#down"/></svg></button>
        <button class="tool wide on" title="Guide Lines"><svg><use href="#guide"/></svg></button>
        <button class="drop on" title="More"><svg><use href="#down"/></svg></button>
        <button class="tool wide" title="Grid Snap"><svg><use href="#grid"/></svg></button>
        <button class="drop" title="More"><svg><use href="#down"/></svg></button>
        <button class="tool wide" title="Trace"><svg><use href="#trace"/></svg></button>
        <button class="drop" title="More"><svg><use href="#down"/></svg></button>
        <button class="tool wide" title="Gravity" disabled><svg><use href="#stamp"/></svg></button>
        <button class="drop" title="More" disabled><svg><use href="#down"/></svg></button>
        <button class="tool narrow" title="Measure"><svg><use href="#ruler12"/></svg></button>
        <i class="grip spaced"></i>
        <button class="tool" title="Favorites"><svg><use href="#star"/></svg></button>
        <button class="tool on" title="Floor Plan"><svg><use href="#house-win"/></svg></button>
        <button class="tool" title="Change Manager"><svg><use href="#cloud-list"/></svg></button>
        <button class="tool" title="Transfer" disabled><svg><use href="#drop-brush"/></svg></button>
        <button class="tool" title="Switch View"><svg><use href="#win-swap"/></svg></button>
        <button class="tool" title="Layer Settings"><svg><use href="#copy-list"/></svg></button>
        <button class="tool on" title="Design Options"><svg><use href="#options"/></svg></button>
        <i class="grip spaced"></i>
        <button class="tool narrow" title="Split"><svg><use href="#scissors"/></svg></button>
        <button class="tool narrow" title="Resize"><svg><use href="#resize"/></svg></button>
        <button class="tool narrow" title="Stretch" disabled><svg><use href="#stretch"/></svg></button>
        <button class="tool narrow" title="Adjust"><svg><use href="#axe"/></svg></button>
        <button class="tool narrow" title="Fillet" disabled><svg><use href="#fillet"/></svg></button>
        <button class="tool narrow" title="Intersect" disabled><svg><use href="#corner"/></svg></button>
        <button class="tool narrow" title="Elevate" disabled><svg><use href="#rise"/></svg></button>
        <button class="tool narrow" title="Offset" disabled><svg><use href="#offset"/></svg></button>
        <i class="sep"></i>
        <button class="tool narrow" title="Explode" disabled><svg><use href="#nodes-x"/></svg></button>
        <button class="tool narrow" title="Edit Curve" disabled><svg><use href="#nodes-arc"/></svg></button>
        <button class="tool narrow" title="Modify" disabled><svg><use href="#hammer"/></svg></button>
        <button class="tool narrow" title="Modify Shape" disabled><svg><use href="#hammer2"/></svg></button>
        <i class="sep"></i>
        <button class="tool narrow" title="Align Bottom" disabled><svg><use href="#hatch-down"/></svg></button>
        <button class="tool narrow" title="Align Side" disabled><svg><use href="#hatch-side"/></svg></button>
        <button class="tool narrow" title="Align Middle" disabled><svg><use href="#hatch-mid"/></svg></button>
        <i class="sep"></i>
        <button class="tool narrow" title="Trim to Roof" disabled><svg><use href="#arrow-house"/></svg></button>
        <button class="tool narrow" title="Merge" disabled><svg><use href="#beam"/></svg></button>
        <button class="tool narrow" title="Solid Operations"><svg><use href="#beam-dark"/></svg></button>
        <button class="tool narrow" title="Remove" disabled><svg><use href="#xo"/></svg></button>
        <i class="sep"></i>
        <button class="tool narrow" title="Morph" disabled><svg><use href="#prism"/></svg></button>
        <button class="tool narrow" title="Morph Edge" disabled><svg><use href="#prism"/></svg></button>
        <i class="grip spaced"></i>
        <button class="tool" title="Toggle Visibility"><svg><use href="#eye-swap"/></svg></button>
        <button class="tool" title="Toggle Locks"><svg><use href="#lock-swap"/></svg></button>
        <i class="line"></i>
        <div class="layer-box">
            <span>Selection's Layer:</span>
            <div>
                <button class="mini" title="Hide" disabled><svg><use href="#eye-off"/></svg></button>
                <button class="mini" title="Lock" disabled><svg><use href="#lock"/></svg></button>
                <button class="mini" title="Unlock" disabled><svg><use href="#unlock"/></svg></button>
            </div>
        </div>
        <i class="line"></i>
        <div class="layer-box">
            <span>All Layers:</span>
            <div>
                <button class="mini" title="Show All"><svg><use href="#eye-off"/></svg></button>
                <button class="mini" title="Lock All"><svg><use href="#lock"/></svg></button>
            </div>
        </div>
        <i class="line"></i>
        <div class="redo-stack">
            <button title="Redo layers" disabled><svg><use href="#redo"/></svg></button>
            <button title="Undo layers" disabled><svg><use href="#undo"/></svg></button>
        </div>
    </div>

    <div class="toolbar sub-bar">
        <i class="grip"></i>
        <button class="tool" title="Layers"><svg><use href="#layers-eye"/></svg></button>
        <i class="sep"></i>
        <button class="tool" title="Group" disabled><svg><use href="#group"/></svg></button>
        <button class="tool" title="Ungroup" disabled><svg><use href="#group2"/></svg></button>
        <button class="tool on" title="Suspend Groups"><svg><use href="#group3"/></svg></button>
        <i class="line"></i>
        <button class="tool" title="Bring to Front" disabled><svg><use href="#tri-top"/></svg></button>
        <button class="tool" title="Bring Forward" disabled><svg><use href="#tri-up"/></svg></button>
        <button class="tool" title="Send Backward" disabled><svg><use href="#tri-down"/></svg></button>
        <button class="tool" title="Send to Back" disabled><svg><use href="#tri-bottom"/></svg></button>
        <button class="tool" title="Mirror" disabled><svg><use href="#mirror"/></svg></button>
    </div>

    <!-- Info box -->
    <section class="info-box">
        <span class="info-title">Main:</span>
        <div class="info-tools">
            <button title="Selection"><svg><use href="#poly-sel"/></svg><svg class="arr"><use href="#right"/></svg></button>
            <button title="Marquee"><svg><use href="#rect-sel"/></svg><svg class="arr"><use href="#right"/></svg></button>
            <button class="magnet" title="Quick Selection"><svg><use href="#magnet"/></svg></button>
            <button class="big" title="Arrow"><svg><use href="#cursor"/></svg><svg class="arr"><use href="#right"/></svg></button>
        </div>
    </section>

    <main class="workspace">

        <!-- Toolbox -->
        <aside class="toolbox">
            <div class="handle short"></div>
            <div class="tools select-tools">
                <button class="on" title="Arrow"><svg class="arrow-icon"><use href="#cursor"/></svg></button>
                <button title="Marquee"><svg><use href="#t-marquee"/></svg></button>
            </div>
            <button class="head"><svg class="dn"><use href="#down"/></svg>Design</button>
            <div class="tools">
                <button title="Shell"><svg><use href="#t-shell"/></svg></button>
                <button title="Slab"><svg><use href="#t-slab"/></svg></button>
                <button title="Wall"><svg><use href="#t-wall"/></svg></button>
                <button title="Roof"><svg><use href="#t-roof"/></svg></button>
                <button title="Door"><svg><use href="#t-door"/></svg></button>
                <button title="Window"><svg><use href="#t-window"/></svg></button>
                <button title="Beam"><svg><use href="#t-beam"/></svg></button>
                <button title="Column"><svg><use href="#t-column"/></svg></button>
                <button title="Stair"><svg><use href="#t-stair"/></svg></button>
                <button title="Railing"><svg><use href="#t-rail"/></svg></button>
                <button title="Mesh"><svg><use href="#t-ramp"/></svg></button>
                <button title="Opening"><svg><use href="#t-opening"/></svg></button>
                <button title="Object"><svg><use href="#t-chair"/></svg></button>
                <button title="Cabinet"><svg><use href="#t-cabinet"/></svg></button>
                <button title="Lamp"><svg><use href="#t-lamp"/></svg></button>
                <button title="Switch"><svg><use href="#t-switch"/></svg></button>
                <button title="Curtain Wall"><svg><use href="#t-curtain"/></svg></button>
                <button title="Zone"><svg><use href="#t-zone"/></svg></button>
            </div>
            <button class="head"><svg class="rt"><use href="#right"/></svg>Model</button>
            <button class="head"><svg class="dn"><use href="#down"/></svg>Annotate</button>
            <div class="tools tight">
                <button title="Text"><svg><use href="#t-text"/></svg></button>
                <button title="Line"><svg><use href="#t-line"/></svg></button>
                <button title="Label"><svg><use href="#t-label"/></svg></button>
                <button title="Polyline"><svg><use href="#t-poly"/></svg></button>
                <button title="Dimension"><svg><use href="#t-dim"/></svg></button>
                <button title="Spline"><svg><use href="#t-spline"/></svg></button>
                <button title="Level Dimension"><svg><use href="#t-level"/></svg></button>
                <button title="Circle"><svg><use href="#t-circle"/></svg></button>
                <button title="Angle Dimension"><svg><use href="#t-angle"/></svg></button>
                <button title="Fill"><svg><use href="#t-fill"/></svg></button>
                <button title="Radial Dimension"><svg><use href="#t-radial"/></svg></button>
                <button title="Hotspot"><svg><use href="#t-hotspot"/></svg></button>
                <button title="Grid Element"><svg><use href="#t-gridel"/></svg></button>
                <button title="Change"><svg><use href="#t-change"/></svg></button>
            </div>
            <button class="head"><svg class="dn"><use href="#down"/></svg>Document</button>
            <div class="tools">
                <button title="Section"><svg><use href="#t-section"/></svg></button>
                <button title="Elevation"><svg><use href="#t-elev"/></svg></button>
                <button title="Drawing"><svg><use href="#t-sheet"/></svg></button>
                <button title="Worksheet"><svg><use href="#t-worksheet"/></svg></button>
                <button title="Camera"><svg><use href="#t-camera"/></svg></button>
                <button title="Detail"><svg><use href="#t-detail"/></svg></button>
                <button title="Figure"><svg><use href="#t-picture"/></svg></button>
                <button title="Globe"><svg><use href="#t-globe"/></svg></button>
            </div>
        </aside>

        <!-- Drawing area -->
        <section class="drawing">
            <div class="tabbar">
                <button class="overview" title="Tab overview"><svg><use href="#tabs"/></svg></button>
                <div class="tab">
                    <svg class="tab-icon"><use href="#plan"/></svg>
                    <span>0. Opt-a-za [0. Ground Floor]</span>
                    <button title="Close tab"><svg viewBox="0 0 8 8"><path class="thick" d="M1 1l6 6M7 1L1 7"/></svg></button>
                </div>
                <div class="tab-nav">
                    <svg class="nav-icon"><use href="#model"/></svg>
                    <svg class="dn"><use href="#down"/></svg>
                </div>
            </div>

            <svg class="plan" viewBox="91 262 1363 701" role="img" aria-label="Ground floor plan">
                <defs>
                    <pattern id="boards" x="0" y="411" width="60" height="5" patternUnits="userSpaceOnUse"><rect width="60" height="5" fill="#ebe0df"/><rect y="4" width="60" height="1" fill="#807879"/></pattern>
                    <pattern id="floor" x="555" y="0" width="23" height="60" patternUnits="userSpaceOnUse"><rect width="23" height="60" fill="#fbf2f1"/><path d="M7.5 0v60M15.5 0v60M22.5 0v60" stroke="#938d8d"/></pattern>
                    <pattern id="insul" width="4" height="4" patternUnits="userSpaceOnUse"><rect width="4" height="4" fill="#6e6e6e"/><rect width="1" height="1" fill="#e4e4e4"/><rect x="2" y="2" width="1" height="1" fill="#e4e4e4"/></pattern>
                    <pattern id="tiles" x="753" y="437" width="30" height="30" patternUnits="userSpaceOnUse"><rect width="30" height="30" fill="#fefefe"/><path d="M29.5 0v30M0 .5h30" stroke="#999" fill="none"/></pattern>
                    <g id="mark-v">
                        <path d="M-22 0L0-23V23z" fill="#000"/>
                        <circle r="16" fill="#fff" stroke="#000"/>
                        <path d="M0-23V23" stroke="#000"/>
                    </g>
                    <g id="mark-c">
                        <path d="M0-22L-23 0H23z" fill="#000"/>
                        <circle r="16" fill="#fff" stroke="#000"/>
                        <path d="M-23 0H23" stroke="#000"/>
                    </g>
                    <g id="lounger">
                        <path d="M0 0h66v36H0z" fill="#e6e2e1" stroke="#000"/>
                        <path d="M24 0v36M28 0v36M32 0v36M36 0v36M40 0v36M44 0v36M48 0v36M52 0v36M56 0v36M60 0v36" stroke="#000" stroke-width="2"/>
                        <path d="M1 1h20v34H1z" fill="#333"/>
                        <path d="M4 0v36M8 0v36M12 0v36M16 0v36M20 0v36M0 6h22M0 12h22M0 18h22M0 24h22M0 30h22" stroke="#aaa" stroke-width=".6"/>
                        <path d="M66 2h8v2h-8zM66 32h8v2h-8z" fill="#fff" stroke="#000"/>
                    </g>
                    <g id="chair">
                        <path d="M3.5 3.5h21v13h-21z" fill="#e2e2e2" stroke="#000"/>
                        <path d="M3.5 1.5h21v5h-21zM.5 3.5h3v13h-3zM24.5 3.5h3v13h-3z" fill="#eee" stroke="#000"/>
                        <path d="M5 6h18" stroke="#000" stroke-width="2"/>
                    </g>
                </defs>

                <!-- decks and house shell -->
                <g shape-rendering="crispEdges">
                    <rect x="362.5" y="408.5" width="184" height="204" fill="url(#boards)" stroke="#777"/>
                    <rect x="998.5" y="408.5" width="184" height="204" fill="url(#boards)" stroke="#777"/>
                    <rect x="546" y="408" width="453" height="204" fill="#fff"/>
                    <rect x="555" y="416" width="436" height="188" fill="url(#floor)" stroke="#777"/>
                    <path d="M546 408h453v8H546zM546 604h453v8H546zM546 408h9v29h-9zM546 584h9v28h-9zM990 408h9v29h-9zM990 584h9v28h-9z" fill="url(#insul)"/>
                    <path d="M546.5 612V583M546.5 437v-29M998.5 408v29M998.5 584v28M554.5 416v21M554.5 584v20M990.5 416v21M990.5 584v20M546 611.5h453M546 437h9M546 584h9M990 437h9M990 584h9" stroke="#000" fill="none"/>
                    <path d="M546 408.5h453M555 416.5h436" stroke="#444"/>
                    <!-- windows -->
                    <g fill="#e6e6e6" stroke="#000">
                        <path d="M671.5 409.5h40v7h-40zM778.5 409.5h39v7h-39zM763.5 604.5h40v6h-40z"/>
                        <path d="M670 409.5h42M777 409.5h41M762 611h42" stroke-width="2"/>
                    </g>
                    <g fill="#a5a5a5">
                        <path d="M671 395h40v6h-40zM684 385h15v5h-15zM777 395h41v6h-41zM790 385h15v5h-15zM763 630h40v6h-40zM775 619h16v6h-16z"/>
                        <path d="M533 487h5v47h-5zM522 502h6v16h-6zM1017 487h5v47h-5zM1006 502h6v16h-6z" opacity=".8"/>
                    </g>
                    <!-- bathroom -->
                    <rect x="754" y="417" width="78" height="135" fill="url(#tiles)"/>
                    <path d="M788 553h38v4h-38z" fill="#fff" stroke="#888"/>
                    <path d="M748 416h6v136h34v6h-40zM832 416h6v143h-12v-7h6zM832 598h6v6h-6z" fill="#000"/>
                </g>
                <g fill="none" stroke="#000">
                    <path d="M759 441l73-24M759 443l73 20M757 417v45" stroke="#666" stroke-dasharray="6 4"/>
                    <path d="M754 462.5h43l5 17 31-17"/>
                    <path class="block" d="M754.5 474.5h22v18h-22zM762.5 474.5h15c14 0 14 18 0 18h-15zM754.5 506.5h22v46h-22zM756.5 516.5h18v27h-18z"/>
                    <circle cx="765.5" cy="529.5" r="1"/>
                    <path d="M757 482h3v3h-3zM754 438h3v-5M757 441h2" stroke-width="2"/>
                    <path d="M788 553c0-22 14-39 36-39M824.5 513.5h3v39h-3z"/>
                    <path d="M838 559c22 0 39 16 39 38M838 597.5h39v2h-39z"/>
                </g>
                <path d="M817 527h6v12h-6zM850 589h13v5h-13z" fill="#aaa"/>

                <!-- kitchen -->
                <g fill="#dedede" stroke="#000">
                    <path d="M717.5 417.5h30v124h-30z"/>
                    <path d="M725.5 417v124M718 418h30" fill="none" stroke-dasharray="4 2"/>
                    <path d="M722 422.5h24.500v19H722c-3-5-3-14 0-19zM726.5 422.500v19M721.5 464.5h26v29h-26z"/>
                    <path d="M716 467v24" stroke-width="2"/>
                    <g fill="none"><circle cx="728" cy="472" r="4"/><circle cx="740" cy="471" r="4"/><circle cx="728" cy="482" r="4"/><circle cx="739" cy="482" r="5"/><path d="M724 491h15" stroke-width="2" stroke-dasharray="3 1"/></g>
                </g>

                <!-- living -->
                <path d="M562 423h87" stroke="#000" stroke-width="2"/>
                <path d="M596 421h18M605.5 416v6" stroke="#000" stroke-width="2"/>
                <g fill="#e0e0e0" stroke="#000">
                    <rect x="554.5" y="552.5" width="51" height="51" rx="2"/>
                    <rect x="605.5" y="552.5" width="51" height="51" rx="2"/>
                    <path d="M555 589.5h102M555 594.5h102M555 602.5h102" fill="none"/>
                </g>

                <!-- bedroom -->
                <g fill="#e0e0e0" stroke="#000">
                    <path d="M870.5 416.5h84v104h-84zM873.5 419.5h36v20h-36zM915.5 419.5h36v20h-36z"/>
                    <path d="M881.5 439.5h64l9 9v70h-82v-70zM881.5 439.5v9h-9M945.5 439.5v9h9"/>
                </g>

                <!-- folding doors -->
                <g fill="none">
                    <path d="M511 444l43-8M511 560l35 7-35 8 43 9M1034 444l-43-8M1034 560l-35 7 35 8-43 9" stroke="#000" stroke-width="3"/>
                    <path d="M511 444l43-8M511 560l35 7-35 8 43 9M1034 444l-43-8M1034 560l-35 7 35 8-43 9" stroke="#eee"/>
                </g>

                <!-- barbecue -->
                <path d="M372.5 419.5h72v23h-72z" fill="#eee" stroke="#000"/>
                <path d="M375.5 420v22M379.5 420v22M383.5 420v22M387.5 420v22M431.5 420v22M435.5 420v22M439.5 420v22" stroke="#000" stroke-width="2"/>
                <path d="M389 418h39v28h-39z"/>
                <path d="M392 421h9v21h-9z" fill="#ddd"/>
                <path d="M391 444.5h35" stroke="#ddd" stroke-dasharray="10 3"/>

                <!-- table and chairs -->
                <use href="#chair" x="399" y="515"/>
                <use href="#chair" x="440" y="515"/>
                <use href="#chair" transform="translate(427 599) rotate(180)"/>
                <use href="#chair" transform="translate(468 599) rotate(180)"/>
                <use href="#chair" transform="translate(376 571) rotate(-90)"/>
                <use href="#chair" transform="translate(489 543) rotate(90)"/>
                <path d="M392.5 531.5h81v51h-81z" fill="#eaeaea" stroke="#000"/>
                <path d="M396 557.5h75" stroke="#000" stroke-width="43" stroke-dasharray="2 3"/>
                <circle cx="433" cy="557" r="2" fill="#fff" stroke="#000"/>

                <use href="#lounger" transform="translate(1107 430) rotate(34)"/>
                <use href="#lounger" transform="translate(1083 565) rotate(-33)"/>

                <!-- room names -->
                <path d="M437 494h27v14h-27zM1074 494h27v14h-27z" fill="#f0e9e8"/>
                <g class="rooms">
                    <text x="450" y="505">Deck</text>
                    <text x="654" y="521">Living</text>
                    <text x="794" y="521">Bathroom</text>
                    <text x="909" y="521">Bedroom</text>
                    <text x="1087" y="505">Deck</text>
                </g>

                <!-- section markers -->
                <g class="marks">
                    <g transform="translate(633.5 316)"><path d="M0 20v57" stroke="#000"/><use href="#mark-v"/><text transform="translate(-2 0) rotate(-90)">B</text><text transform="translate(10 0) rotate(-90)">09</text></g>
                    <g transform="translate(907.5 316)"><path d="M0 20v57" stroke="#000"/><use href="#mark-v"/><text transform="translate(-2 0) rotate(-90)">A</text><text transform="translate(10 0) rotate(-90)">09</text></g>
                    <g transform="translate(633.5 908)"><path d="M0-76v56" stroke="#000"/><use href="#mark-v"/><text transform="translate(-2 0) rotate(-90)">B</text><text transform="translate(10 0) rotate(-90)">09</text></g>
                    <g transform="translate(907.5 908)"><path d="M0-76v56" stroke="#000"/><use href="#mark-v"/><text transform="translate(-2 0) rotate(-90)">A</text><text transform="translate(10 0) rotate(-90)">09</text></g>
                    <g transform="translate(270 510.5)"><path d="M20 0h57" stroke="#000"/><use href="#mark-c"/><text y="-3">C</text><text y="10">1</text></g>
                    <g transform="translate(1275 510.5)"><path d="M-20 0h-57" stroke="#000"/><use href="#mark-c"/><text y="-3">C</text><text y="10">1</text></g>
                </g>
            </svg>

            <!-- Quick options -->
            <div class="quickbar">
                <div class="zooms">
                    <button title="Previous Zoom"><svg><use href="#zoom-back"/></svg></button>
                    <button title="Next Zoom" disabled><svg><use href="#zoom-fwd"/></svg></button>
                    <button title="Zoom In"><svg><use href="#zoom-in"/></svg></button>
                </div>
                <button class="quick"><svg><use href="#zoom-fit"/></svg><span>80%</span><svg class="arr"><use href="#right"/></svg></button>
                <button class="quick"><svg><use href="#orient"/></svg><span>0° 0' 0"</span><svg class="arr"><use href="#right"/></svg></button>
                <button class="quick"><svg><use href="#scale"/></svg><span>1:50</span><svg class="arr"><use href="#right"/></svg></button>
                <button class="quick"><svg><use href="#layers"/></svg><span>300 | Propos...</span><svg class="arr"><use href="#right"/></svg></button>
                <button class="quick"><svg><use href="#hatch-win"/></svg><span>Entire Model</span><svg class="arr"><use href="#right"/></svg></button>
                <button class="quick"><svg><use href="#pen"/></svg><span>Default Pen ...</span><svg class="arr"><use href="#right"/></svg></button>
                <button class="quick"><svg><use href="#pens"/></svg><span>300 | Propos...</span><svg class="arr"><use href="#right"/></svg></button>
                <button class="quick"><svg><use href="#copy-to"/></svg><span>300 | Propos...</span><svg class="arr"><use href="#right"/></svg></button>
                <button class="quick"><svg><use href="#reno"/></svg><span>07 Proposed...</span><svg class="arr"><use href="#right"/></svg></button>
                <button class="quick"><svg><use href="#options"/></svg><span>Opt-a-za</span><svg class="arr"><use href="#right"/></svg></button>
                <button class="quick"><svg><use href="#dimstd"/></svg><span>Metric mm D...</span><svg class="arr"><use href="#right"/></svg></button>
            </div>
        </section>

        <!-- Design options palette -->
        <aside class="options">
            <div class="handle"></div>
            <div class="options-head">
                <span>Default: Main Model</span>
                <button class="boxed" title="Design Option Manager"><svg><use href="#options"/><use href="#list-badge"/></svg></button>
            </div>
            <div class="main-model">
                <svg class="pencil"><use href="#pencil"/></svg>
                <svg class="model"><use href="#model"/></svg>
                <b>(Main Model)</b>
            </div>
            <div class="option-scroll">
                <ul class="option-list">
                    <li class="group"><svg class="dn"><use href="#down"/></svg>Living</li>
                    <li><svg class="eye"><use href="#eye"/></svg>Living 1</li>
                    <li><svg class="eye"><use href="#eye-shut"/></svg>Living 2</li>
                    <li class="group"><svg class="dn"><use href="#down"/></svg>Bedroom</li>
                    <li><svg class="eye"><use href="#eye"/></svg>Bedroom 1</li>
                    <li><svg class="eye"><use href="#eye-shut"/></svg>Bedroom 2</li>
                    <li class="group"><svg class="dn"><use href="#down"/></svg>Deck - Living</li>
                    <li class="selected"><svg class="eye"><use href="#eye"/></svg>Deck 1</li>
                    <li><svg class="eye"><use href="#eye-shut"/></svg>Deck 2</li>
                    <li class="group"><svg class="dn"><use href="#down"/></svg>Deck - Bedroom</li>
                    <li><svg class="eye"><use href="#eye"/></svg>Deck 1</li>
                    <li><svg class="eye"><use href="#eye-shut"/></svg>Deck 2</li>
                </ul>
                <div class="scroll faint">
                    <svg><use href="#chev-up"/></svg>
                    <svg><use href="#chev-down"/></svg>
                </div>
            </div>
            <p class="count">Selected: 0 Editable: 0</p>
            <button class="relink" disabled><svg><use href="#relink"/></svg>Relink</button>
            <button class="head wide-head"><svg class="dn"><use href="#down"/></svg>Focused Editing</button>
            <label class="check"><input type="checkbox">Edit Default Only</label>
            <label class="check"><input type="checkbox">Fade Environment</label>
            <div class="fade-row">
                <button class="swatch" title="Fade color" disabled><i></i><svg class="arr"><use href="#right"/></svg></button>
                <div class="fade">
                    <input type="range" min="0" max="100" value="100" aria-label="Fade amount" disabled>
                    <div class="ticks"></div>
                </div>
            </div>
        </aside>

        <!-- Navigator -->
        <aside class="navigator">
            <div class="handle"></div>
            <div class="nav-tabs">
                <button title="Project Map"><svg><use href="#model"/></svg></button>
                <i class="line"></i>
                <button class="on" title="View Map"><svg><use href="#viewmap"/></svg></button>
                <button title="Layout Book"><svg><use href="#layoutbook"/></svg></button>
                <button title="Publisher Sets"><svg><use href="#publisher"/></svg></button>
                <button class="boxed nav-menu" title="Options"><svg class="lines"><use href="#menu"/></svg><svg class="arr"><use href="#right"/></svg></button>
            </div>
            <label class="search">
                <svg><use href="#search"/></svg>
                <input type="text" placeholder="Search View Map" aria-label="Search View Map">
            </label>
            <div class="tree-wrap">
                <ul class="tree">
                    <li><i></i><svg><use href="#plan"/></svg>SHOW ALL IN PLAN</li>
                    <li><i></i><svg><use href="#section"/></svg>C Section C-C</li>
                    <li><i></i><svg><use href="#section"/></svg>C Section C-C (1)</li>
                    <li><svg class="exp"><use href="#chev-right"/></svg><svg><use href="#plan-link"/></svg>SHOW ALL IN PLAN</li>
                    <li><svg class="exp"><use href="#chev-right"/></svg><svg><use href="#folder"/></svg>GENERAL</li>
                    <li><svg class="exp"><use href="#chev-right"/></svg><svg><use href="#folder"/></svg>SITE</li>
                    <li><svg class="exp"><use href="#chev-right"/></svg><svg><use href="#folder"/></svg>ELEVATIONS &amp; 3D VIEWS</li>
                    <li><svg class="exp"><use href="#chev-right"/></svg><svg><use href="#folder"/></svg>PLANS</li>
                    <li><svg class="exp"><use href="#chev-right"/></svg><svg><use href="#folder"/></svg>INTERNALS</li>
                    <li><svg class="exp"><use href="#chev-right"/></svg><svg><use href="#folder"/></svg>SECTIONS</li>
                    <li><svg class="exp"><use href="#chev-right"/></svg><svg><use href="#folder"/></svg>DETAILS</li>
                    <li><svg class="exp"><use href="#chev-right"/></svg><svg><use href="#folder"/></svg>SCHEDULES</li>
                    <li><svg class="exp"><use href="#chev-right"/></svg><svg><use href="#folder"/></svg>ANCILLARY</li>
                    <li class="current"><i></i><svg><use href="#plan"/></svg>0. Opt-a-za
                        <svg class="hand" viewBox="0 0 20 24"><path d="M6 14V3c0-2 3-2 3 0v7c1-1 3-1 3 1 1-1 3-1 3 1 1-1 3 0 3 1v4l-2 5H8l-6-8c0-2 2-2 4 0z"/></svg>
                    </li>
                    <li><i></i><svg><use href="#plan"/></svg>0. Opt-e-ze</li>
                    <li><i></i><svg><use href="#plan"/></svg>0. Opt-i-zi</li>
                    <li><i></i><svg><use href="#plan"/></svg>0. Opt-o-zo</li>
                </ul>
                <div class="scroll">
                    <svg><use href="#chev-up"/></svg>
                    <div class="thumb"></div>
                    <svg><use href="#chev-down"/></svg>
                </div>
            </div>
            <div class="nav-actions">
                <button title="Save View"><svg><use href="#add-view"/></svg></button>
                <button title="Clone Folder"><svg><use href="#add-clone"/></svg></button>
                <button title="New Folder"><svg><use href="#add-folder"/></svg></button>
                <button title="View Settings"><svg><use href="#listing"/></svg></button>
                <button title="Delete"><svg><use href="#delete"/></svg></button>
            </div>
            <button class="head wide-head"><svg class="dn"><use href="#down"/></svg>Properties</button>
            <div class="ids">
                <svg><use href="#folder-b"/></svg>
                <input class="id" type="text" value="0." aria-label="View ID">
                <input class="name" type="text" value="Opt-a-za" aria-label="View name">
            </div>
            <ul class="props">
                <li><svg><use href="#layers"/></svg>300 | Proposed Floor Plan</li>
                <li><svg><use href="#scale"/></svg>1:50</li>
                <li><svg><use href="#pens"/></svg>300 | Proposed Floor Plan</li>
            </ul>
            <button class="settings">Settings...</button>
            <div class="reno">
                <div class="handle"></div>
                <p>Default Elements:</p>
                <div class="reno-tools">
                    <button title="Existing"><svg><use href="#bricks"/></svg></button>
                    <button title="To be Demolished" disabled><svg><use href="#dozer"/></svg></button>
                    <button class="on" title="New"><svg><use href="#crane"/></svg></button>
                    <button class="boxed" title="Renovation Options"><svg><use href="#plans"/></svg></button>
                </div>
            </div>
            <div class="filter">
                <label for="filter">Renovation Filter:</label>
                <div class="select">
                    <select id="filter"><option>07 Proposed Plan</option></select>
                    <svg><use href="#chev-thin"/></svg>
                </div>
            </div>
        </aside>
    </main>

    <!-- Bottom toolbar -->
    <div class="toolbar bottom-bar">
        <div class="bar-part">
            <i class="grip"></i>
            <button class="tool on" title="Wall Hatching"><svg><use href="#b-wall"/></svg></button>
            <button class="tool" title="Hatch Direction"><svg><use href="#b-hatch-arrow"/></svg></button>
            <button class="tool" title="Profile"><svg><use href="#b-trap"/></svg></button>
            <button class="tool" title="Columns"><svg><use href="#b-cols"/></svg></button>
            <button class="tool" title="Beam Grid"><svg><use href="#b-grid"/></svg></button>
            <button class="tool" title="Line Ends"><svg><use href="#b-arrowbar"/></svg></button>
            <button class="tool" title="Slab Hatching"><svg><use href="#b-slab"/></svg></button>
            <button class="tool" title="Cut Hatching"><svg><use href="#b-hatch"/></svg></button>
            <button class="tool on" title="Fills"><svg><use href="#b-fill"/></svg></button>
            <button class="tool" title="Zones Dashed"><svg><use href="#b-house-dash"/></svg></button>
            <button class="tool" title="Highlight"><svg><use href="#b-diamond"/></svg></button>
            <button class="tool" title="Zone"><svg><use href="#b-zone"/></svg></button>
            <button class="tool on" title="Overlap"><svg><use href="#b-overlap"/></svg></button>
            <button class="tool on" title="Dimensions"><svg><use href="#b-dim"/></svg></button>
            <i class="line"></i>
            <button class="tool push" title="Fit Dimension"><svg><use href="#b-dimc"/></svg></button>
            <button class="tool" title="Fit Fill"><svg><use href="#b-fillb"/></svg></button>
            <button class="tool" title="Fit Text"><svg><use href="#b-abc"/></svg></button>
            <button class="tool" title="Fit Picture"><svg><use href="#b-pic"/></svg></button>
            <button class="tool" title="Curve Handles"><svg><use href="#b-curve"/></svg></button>
            <i class="sep"></i>
            <button class="tool" title="Roof Outline"><svg><use href="#b-roof"/></svg></button>
            <i class="sep"></i>
            <button class="tool" title="Shell Outline"><svg><use href="#b-barrel"/></svg></button>
            <i class="sep"></i>
            <button class="tool" title="Settings"><svg><use href="#b-panels"/></svg></button>
        </div>
        <div class="bar-part">
            <i class="grip"></i>
            <button class="open-3d"><svg><use href="#b-3dwin"/></svg>Open 3D Window</button>
            <i class="sep"></i>
            <button class="tool" title="Perspective"><svg><use href="#b-persp"/></svg></button>
            <button class="tool" title="Axonometry"><svg><use href="#b-axo"/></svg></button>
            <button class="tool wide" title="Orbit"><svg><use href="#b-orbit"/></svg></button>
            <button class="drop" title="More"><svg><use href="#down"/></svg></button>
            <i class="line"></i>
            <button class="tool" title="Walk" disabled><svg><use href="#b-walk"/></svg></button>
            <button class="tool" title="Explore" disabled><svg><use href="#b-explore"/></svg></button>
            <i class="sep"></i>
            <button class="tool" title="Fit" disabled><svg><use href="#b-fit"/></svg></button>
            <button class="tool" title="Home" disabled><svg><use href="#b-homefit"/></svg></button>
            <button class="tool" title="Look To" disabled><svg><use href="#b-station"/></svg></button>
            <button class="tool" title="Look Perpendicular" disabled><svg><use href="#b-pushbox"/></svg></button>
            <button class="tool" title="Horizon" disabled><svg><use href="#b-globe"/></svg></button>
            <i class="sep"></i>
            <button class="tool wide" title="3D Styles"><svg><use href="#b-boxlist"/></svg></button>
            <button class="drop" title="More"><svg><use href="#down"/></svg></button>
            <i class="sep"></i>
            <button class="tool wide" title="Filter Elements"><svg><use href="#b-boxnodes"/></svg></button>
            <button class="drop" title="More"><svg><use href="#down"/></svg></button>
            <button class="tool wide" title="Filter"><svg><use href="#b-filter"/></svg></button>
            <button class="tool wide" title="3D Cutaway"><svg><use href="#b-cut"/></svg></button>
            <button class="drop" title="More"><svg><use href="#down"/></svg></button>
            <i class="line"></i>
            <button class="tool wide" title="Surface Painter"><svg><use href="#b-brush"/></svg></button>
            <button class="tool narrow" title="Clear Paint" disabled><svg><use href="#drop-brush"/></svg></button>
            <i class="sep"></i>
            <button class="tool wide" title="Photo Render"><svg><use href="#b-camera"/></svg></button>
            <button class="drop" title="More"><svg><use href="#down"/></svg></button>
            <button class="tool" title="Render Settings"><svg><use href="#b-camlist"/></svg></button>
            <button class="tool" title="Sun Study"><svg><use href="#b-homepts"/></svg></button>
            <i class="sep"></i>
            <button class="tool" title="Fly Through"><svg><use href="#b-video"/></svg></button>
        </div>
    </div>

    <!-- Status bar -->
    <footer class="status">
        <span>Click an Element or Draw a Selection Area. Press and Hold Ctrl+Shift to Toggle Element/Sub-Element Selection.</span>
        <svg><use href="#windows"/></svg>
        <div class="brand">GRAPHISOFT <span>ID</span></div>
    </footer>

</body>

</html>
```
FILE: styles.css
```
* {
    margin: 0;
    padding: 0;
    box-sizing: border-box;
}

:root {
    --blue: #3d7edb;
    --orange: #e0793c;
    --rose: #e2553d;
}

body {
    font-family: "Open Sans", "Noto Sans", sans-serif;
    font-size: 11px;
    line-height: 16px;
    color: #111;
    background-color: #efefef;
    height: 100vh;
    display: flex;
    flex-direction: column;
    overflow: hidden;
}

button,
input,
select {
    font: inherit;
    color: inherit;
    background: none;
    border: none;
}

ul {
    list-style: none;
}

/* Icons */
svg {
    fill: none;
    stroke: currentColor;
    stroke-width: 1.2;
    flex-shrink: 0;
    display: block;
}

.sprite {
    display: none;
}

.thick { stroke-width: 1.7; }
.b { stroke: var(--blue); }
.bf { fill: var(--blue); stroke: none; }
.b3 { stroke: var(--blue); stroke-width: 4; }
.o { stroke: var(--orange); }
.r { stroke: var(--rose); }
.f { fill: currentColor; stroke: none; }
.white { fill: #fff; }
.pale { fill: #eaf3fd; }
.grey { fill: #8a8a8a; }
.fold { fill: #ececec; }
.shut { fill: #cfcfcf; stroke: #999; }
.red { stroke: #e0563a; stroke-width: 3; }

.t8,
.t10 {
    font: 8px "Liberation Sans", Arial, sans-serif;
    fill: currentColor;
    stroke: none;
}

.t10 { font-size: 11px; }
.bold { font-weight: bold; }

.dn {
    width: 8px;
    height: 5px;
}

.rt,
.arr {
    width: 5px;
    height: 8px;
}

button:disabled {
    color: #a8a8a8;
    --blue: #a6c8ee;
    --rose: #e9b0a6;
}

.on {
    background-color: #c0dcf3;
    box-shadow: inset 0 0 0 1px #92c0e8;
}

/* Title and menu */
.top {
    background-color: #fff;
}

.titlebar {
    height: 22px;
    display: flex;
    align-items: center;
    gap: 6px;
    padding: 0 19px 0 3px;
}

.logo {
    width: 14px;
    height: 14px;
}

.window-buttons {
    margin-left: auto;
    display: flex;
    gap: 33px;
}

.window-buttons svg {
    width: 12px;
    height: 12px;
}

.menubar {
    height: 19px;
    display: flex;
    align-items: center;
    gap: 15px;
    padding: 0 4px 0 7px;
}

.menubar a {
    color: inherit;
    text-decoration: none;
}

.doc-buttons {
    margin-left: auto;
    display: flex;
    gap: 4px;
}

.doc-buttons svg {
    width: 10px;
    height: 10px;
    stroke-width: 2;
}

/* Toolbars */
.toolbar {
    display: flex;
    align-items: center;
    color: #2b2b2b;
    flex-shrink: 0;
}

.main-bar {
    height: 38px;
    padding-left: 4px;
}

.sub-bar {
    height: 27px;
    padding: 0 0 1px 4px;
    border-bottom: 1px solid #d4d4d4;
}

.tool,
.drop {
    height: 31px;
    width: 29px;
    display: flex;
    align-items: center;
    justify-content: center;
    flex-shrink: 0;
}

.sub-bar .tool {
    height: 23px;
}

.tool svg {
    width: 22px;
    height: 22px;
}

.wide { width: 34px; }
.narrow { width: 25px; }
.drop { width: 16px; }

.drop svg {
    width: 10px;
    height: 6px;
}

.sep,
.grip,
.line {
    width: 1px;
    height: 28px;
    background-color: #8c8c8c;
    flex-shrink: 0;
}

.sep {
    margin: 0 4px;
}

.sub-bar .sep,
.sub-bar .line {
    height: 19px;
    margin: 0 3px 0 2px;
}

.sub-bar .sep {
    margin: 0 0 0 9px;
}

.grip {
    height: 14px;
}

.spaced {
    margin-left: 10px;
}

.layer-box {
    width: 94px;
    padding: 4px 0 0 3px;
    white-space: nowrap;
    align-self: flex-start;
}

.layer-box div {
    display: flex;
    gap: 14px;
    padding-left: 6px;
}

.mini svg {
    width: 16px;
    height: 13px;
}

.redo-stack {
    padding-left: 9px;
    display: grid;
    gap: 2px;
}

.redo-stack svg {
    width: 14px;
    height: 14px;
}

/* Info box */
.info-box {
    height: 134px;
    padding: 1px 0 0 9px;
    border-bottom: 1px solid #d4d4d4;
    flex-shrink: 0;
    position: relative;
}

.info-box::before {
    content: "";
    position: absolute;
    left: 4px;
    top: 41px;
    width: 1px;
    height: 51px;
    background-color: #8c8c8c;
}

.info-title {
    display: block;
    font-size: 9px;
}

.info-tools {
    display: flex;
    align-items: flex-end;
    gap: 2px;
    padding: 7px 0 0 1px;
}

.info-tools button {
    width: 40px;
    height: 18px;
    display: flex;
    align-items: center;
    justify-content: space-around;
    background-color: #e0e0e0;
    border: 1px solid #ababab;
    color: #2b2b2b;
}

.info-tools svg:first-child {
    width: 22px;
    height: 15px;
}

.info-tools .arr {
    width: 5px;
    height: 8px;
}

.info-tools .magnet {
    background-color: #cce4f7;
    border-color: #19548f;
}

.info-tools .big {
    width: 48px;
    height: 28px;
}

.info-tools .big svg:first-child {
    height: 20px;
}

/* Workspace */
.workspace {
    flex: 1;
    min-height: 0;
    display: flex;
}

.handle {
    width: 71px;
    height: 2px;
    margin: 3px auto 4px;
    background-color: #8f8f8f;
    border-bottom: 1px solid #f6f6f6;
    flex-shrink: 0;
}

.short {
    width: 34px;
}

.head {
    width: 100%;
    height: 20px;
    padding-left: 6px;
    display: flex;
    align-items: center;
    gap: 8px;
    background-color: #d5d5d5;
    border-radius: 3px;
    flex-shrink: 0;
}

.head .dn { color: #333; }
.head .rt { margin: 0 1px 0 2px; }

/* Toolbox */
.toolbox {
    width: 91px;
    border-right: 1px solid #d0d0d0;
    display: flex;
    flex-direction: column;
    overflow: hidden;
    flex-shrink: 0;
}

.toolbox .head + .head {
    margin-top: 1px;
}

.tools {
    display: grid;
    grid-template-columns: 44px 44px;
    grid-auto-rows: 30px;
    padding: 1px 0 5px;
    color: #2b2b2b;
}

.tools button {
    display: flex;
    align-items: center;
    justify-content: center;
}

.tools svg {
    width: 30px;
    height: 24px;
}

.tools .arrow-icon {
    width: 24px;
}

.select-tools {
    grid-auto-rows: 27px;
    padding: 0 0 6px;
}

.tight {
    grid-template-columns: 36px 36px;
    padding: 3px 0;
}

/* Drawing area */
.drawing {
    flex: 1;
    min-width: 0;
    display: flex;
    flex-direction: column;
    background-color: #fefefe;
}

.tabbar {
    height: 22px;
    display: flex;
    background-color: #d4d4d4;
    flex-shrink: 0;
}

.overview {
    width: 26px;
    display: grid;
    place-items: center;
    color: #2b2b2b;
}

.overview svg {
    width: 20px;
    height: 16px;
}

.tab {
    width: 300px;
    display: flex;
    align-items: center;
    gap: 3px;
    padding: 0 9px 0 3px;
    background-color: #fff;
}

.tab-icon {
    width: 18px;
    height: 17px;
}

.tab button {
    margin-left: auto;
}

.tab button svg {
    width: 8px;
    height: 8px;
}

.tab-nav {
    width: 50px;
    margin-left: auto;
    display: flex;
    align-items: center;
    justify-content: space-between;
    padding: 0 3px 0 8px;
    background-color: #e8e8e8;
}

.nav-icon {
    width: 22px;
    height: 18px;
}

.plan {
    flex: 1;
    min-height: 0;
    width: 100%;
    stroke: none;
    stroke-width: 1;
    fill: #000;
}

.rooms text,
.marks text {
    font: 12px "Liberation Sans", Arial, sans-serif;
    text-anchor: middle;
}

.marks text {
    font-size: 10px;
}

.block {
    fill: #e0e0e0;
}

/* Quick options */
.quickbar {
    height: 19px;
    display: flex;
    background-color: #efefef;
    flex-shrink: 0;
}

.zooms {
    width: 72px;
    display: flex;
    justify-content: space-around;
    align-items: center;
}

.quickbar svg {
    width: 18px;
    height: 16px;
}

.quick {
    flex: 1;
    min-width: 0;
    display: flex;
    align-items: center;
    gap: 2px;
    padding: 0 7px 0 4px;
    border-left: 1px solid #999;
}

.quick span {
    flex: 1;
    padding-left: 5px;
    white-space: nowrap;
}

.quickbar .arr {
    width: 5px;
    height: 8px;
}

/* Design options */
.options {
    width: 208px;
    border-left: 1px solid #d0d0d0;
    display: flex;
    flex-direction: column;
    padding-left: 1px;
    flex-shrink: 0;
}

.boxed {
    background-color: #e0e0e0;
    border: 1px solid #ababab;
    display: flex;
    align-items: center;
    justify-content: center;
}

.options-head {
    height: 27px;
    display: flex;
    align-items: center;
    justify-content: space-between;
    padding: 0 3px 0 1px;
    flex-shrink: 0;
}

.options-head .boxed {
    width: 28px;
    height: 21px;
}

.options-head .boxed svg {
    width: 20px;
    height: 20px;
}

.main-model {
    height: 25px;
    display: flex;
    align-items: center;
    background-color: #fff;
    padding-left: 3px;
    flex-shrink: 0;
}

.pencil {
    width: 18px;
    height: 16px;
    margin-right: 4px;
}

.model {
    width: 20px;
    height: 18px;
    margin-right: 6px;
}

.option-scroll {
    flex: 1;
    min-height: 0;
    display: flex;
}

.option-list {
    flex: 1;
    background-color: #fff;
}

.option-list li {
    height: 21px;
    display: flex;
    align-items: center;
    gap: 4px;
    padding-left: 3px;
    border-bottom: 1px solid #ececec;
}

.option-list .group {
    font-weight: bold;
    background-color: #efefef;
    gap: 6px;
    padding-left: 1px;
}

.option-list .selected {
    background-color: #0078d7;
    color: #fff;
}

.eye {
    width: 17px;
    height: 11px;
    color: #333;
}

.scroll {
    width: 16px;
    display: flex;
    flex-direction: column;
    align-items: center;
    justify-content: space-between;
    padding: 4px 0;
    color: #444;
}

.scroll svg {
    width: 10px;
    height: 10px;
}

.faint {
    color: #bdbdbd;
}

.count {
    padding: 6px 0 6px 1px;
}

.relink {
    height: 21px;
    margin: 0 3px 37px 2px;
    display: flex;
    align-items: center;
    justify-content: center;
    gap: 4px;
    background-color: #ccc;
    border: 1px solid #bfbfbf;
    flex-shrink: 0;
}

.relink:disabled {
    color: #8d8d8d;
}

.relink svg {
    width: 18px;
    height: 18px;
}

.wide-head {
    width: auto;
    height: 22px;
    margin: 0 2px 0 1px;
    gap: 10px;
}

.check {
    display: flex;
    align-items: center;
    gap: 3px;
    padding-left: 1px;
    height: 35px;
    flex-shrink: 0;
}

.wide-head + .check {
    margin-top: 3px;
}

.check input {
    appearance: none;
    width: 13px;
    height: 13px;
    background-color: #fff;
    border: 1px solid #333;
}

.fade-row {
    display: flex;
    gap: 10px;
    padding: 2px 8px 3px 2px;
}

.swatch {
    width: 28px;
    height: 21px;
    display: flex;
    align-items: center;
    justify-content: space-around;
    background-color: #ccc;
    border: 1px solid #c0c0c0;
}

.swatch i {
    width: 13px;
    height: 13px;
    background-color: #edcf9f;
}

.fade {
    flex: 1;
    padding-top: 1px;
}

.fade input {
    appearance: none;
    display: block;
    width: 100%;
    height: 15px;
    background: linear-gradient(#d4d4d4, #d4d4d4) center / 100% 3px no-repeat;
}

.fade input::-webkit-slider-thumb {
    appearance: none;
    width: 9px;
    height: 14px;
    background-color: #c4c4c4;
    clip-path: polygon(0 0, 100% 0, 100% 70%, 50% 100%, 0 70%);
}

.ticks {
    height: 3px;
    margin: 2px 4px 0;
    background: repeating-linear-gradient(90deg, #c0c0c0 0 1px, transparent 1px 15px);
}

/* Navigator */
.navigator {
    width: 258px;
    border-left: 1px solid #d0d0d0;
    display: flex;
    flex-direction: column;
    flex-shrink: 0;
}

.nav-tabs {
    height: 30px;
    display: flex;
    align-items: center;
    padding: 0 3px 0 2px;
    color: #2b2b2b;
    flex-shrink: 0;
}

.nav-tabs button,
.reno-tools button {
    width: 30px;
    height: 29px;
    display: flex;
    align-items: center;
    justify-content: center;
}

.nav-tabs svg,
.reno-tools svg {
    width: 22px;
    height: 20px;
}

.nav-tabs .line {
    height: 19px;
    margin: 0 6px 0 5px;
}

.nav-tabs .nav-menu {
    width: 33px;
    height: 21px;
    margin-left: auto;
    gap: 5px;
}

.nav-menu .lines {
    width: 14px;
    height: 12px;
}

.nav-menu .arr {
    width: 5px;
    height: 8px;
}

.search {
    height: 23px;
    margin: 5px 2px 2px;
    display: flex;
    align-items: center;
    gap: 4px;
    padding-left: 4px;
    background-color: #fff;
    border: 1px solid #777;
    flex-shrink: 0;
}

.search svg {
    width: 14px;
    height: 14px;
    color: #555;
}

.search input {
    flex: 1;
    min-width: 0;
    outline: none;
}

.search input::placeholder {
    color: #555;
}

.tree-wrap {
    flex: 1;
    min-height: 0;
    display: flex;
}

.tree {
    flex: 1;
    background-color: #fff;
}

.tree li {
    height: 22px;
    display: flex;
    align-items: center;
    padding-left: 18px;
    white-space: nowrap;
}

.tree li svg {
    width: 20px;
    height: 18px;
    margin-right: 3px;
}

.tree li i,
.tree li .exp {
    width: 9px;
    height: 9px;
    margin-right: 4px;
    color: #aaa;
}

.tree .current {
    font-weight: bold;
    background-color: #cce8ff;
    box-shadow: inset 0 0 0 1px #99d1ff;
    position: relative;
}

/* pointer over the selected view */
.tree li .hand {
    position: absolute;
    left: 118px;
    top: 10px;
    width: 20px;
    height: 24px;
    fill: #fff;
    stroke: #000;
    z-index: 1;
}

.tree-wrap .scroll {
    background-color: #f0f0f0;
}

.thumb {
    flex: 1;
    width: 15px;
    margin: 70px 0 2px;
    background-color: #cdcdcd;
}

.nav-actions {
    height: 35px;
    display: flex;
    align-items: center;
    padding-left: 5px;
    gap: 6px;
    flex-shrink: 0;
}

.nav-actions svg {
    width: 24px;
    height: 24px;
}

.ids {
    height: 22px;
    display: flex;
    align-items: center;
    gap: 2px;
    padding: 0 2px;
    flex-shrink: 0;
}

.ids svg {
    width: 18px;
    height: 16px;
}

.ids input {
    height: 19px;
    padding-left: 4px;
    background-color: #fff;
    border: 1px solid #777;
}

.id {
    width: 48px;
}

.name {
    flex: 1;
    min-width: 0;
}

.props li {
    height: 21px;
    display: flex;
    align-items: center;
    gap: 1px;
    padding-left: 3px;
}

.props svg {
    width: 18px;
    height: 16px;
}

.settings {
    height: 21px;
    margin: 1px 3px 3px;
    background-color: #e1e1e1;
    border: 1px solid #adadad;
    flex-shrink: 0;
}

.reno {
    border-top: 1px solid #d4d4d4;
    border-bottom: 1px solid #a0a0a0;
    padding-bottom: 6px;
}

.reno p {
    padding: 2px 0 3px 2px;
}

.reno-tools {
    display: flex;
    padding: 0 3px 0 2px;
}

.reno-tools .boxed {
    width: 28px;
    margin-left: auto;
}

.filter {
    padding: 7px 2px 4px;
}

.filter label {
    display: block;
    padding-bottom: 3px;
}

.select {
    position: relative;
}

.select select {
    appearance: none;
    width: 100%;
    height: 22px;
    padding-left: 5px;
    background-color: #fff;
    border: 1px solid #777;
}

.select svg {
    position: absolute;
    right: 4px;
    top: 7px;
    width: 10px;
    height: 10px;
    pointer-events: none;
}

/* Bottom toolbar and status bar */
.bottom-bar {
    height: 35px;
    padding: 0 11px 0 92px;
    justify-content: space-between;
    border-top: 1px solid #cfcfcf;
    border-bottom: 1px solid #d4d4d4;
}

.bar-part {
    display: flex;
    align-items: center;
}

.bar-part .grip {
    margin-right: 3px;
}

.push {
    margin-left: 4px;
}

.open-3d {
    display: flex;
    align-items: center;
    gap: 3px;
    padding-right: 6px;
}

.open-3d svg {
    width: 22px;
    height: 22px;
}

.status {
    height: 23px;
    display: flex;
    align-items: center;
    padding-left: 2px;
    flex-shrink: 0;
}

.status svg {
    width: 18px;
    height: 16px;
    margin: 0 4px 0 auto;
}

.brand {
    width: 130px;
    margin-right: 23px;
    text-align: center;
    font-family: Lato, sans-serif;
    font-size: 13px;
    font-weight: bold;
    color: #444;
    border-left: 1px solid #d4d4d4;
    border-right: 1px solid #d4d4d4;
}

.brand span {
    font-weight: normal;
}
```
